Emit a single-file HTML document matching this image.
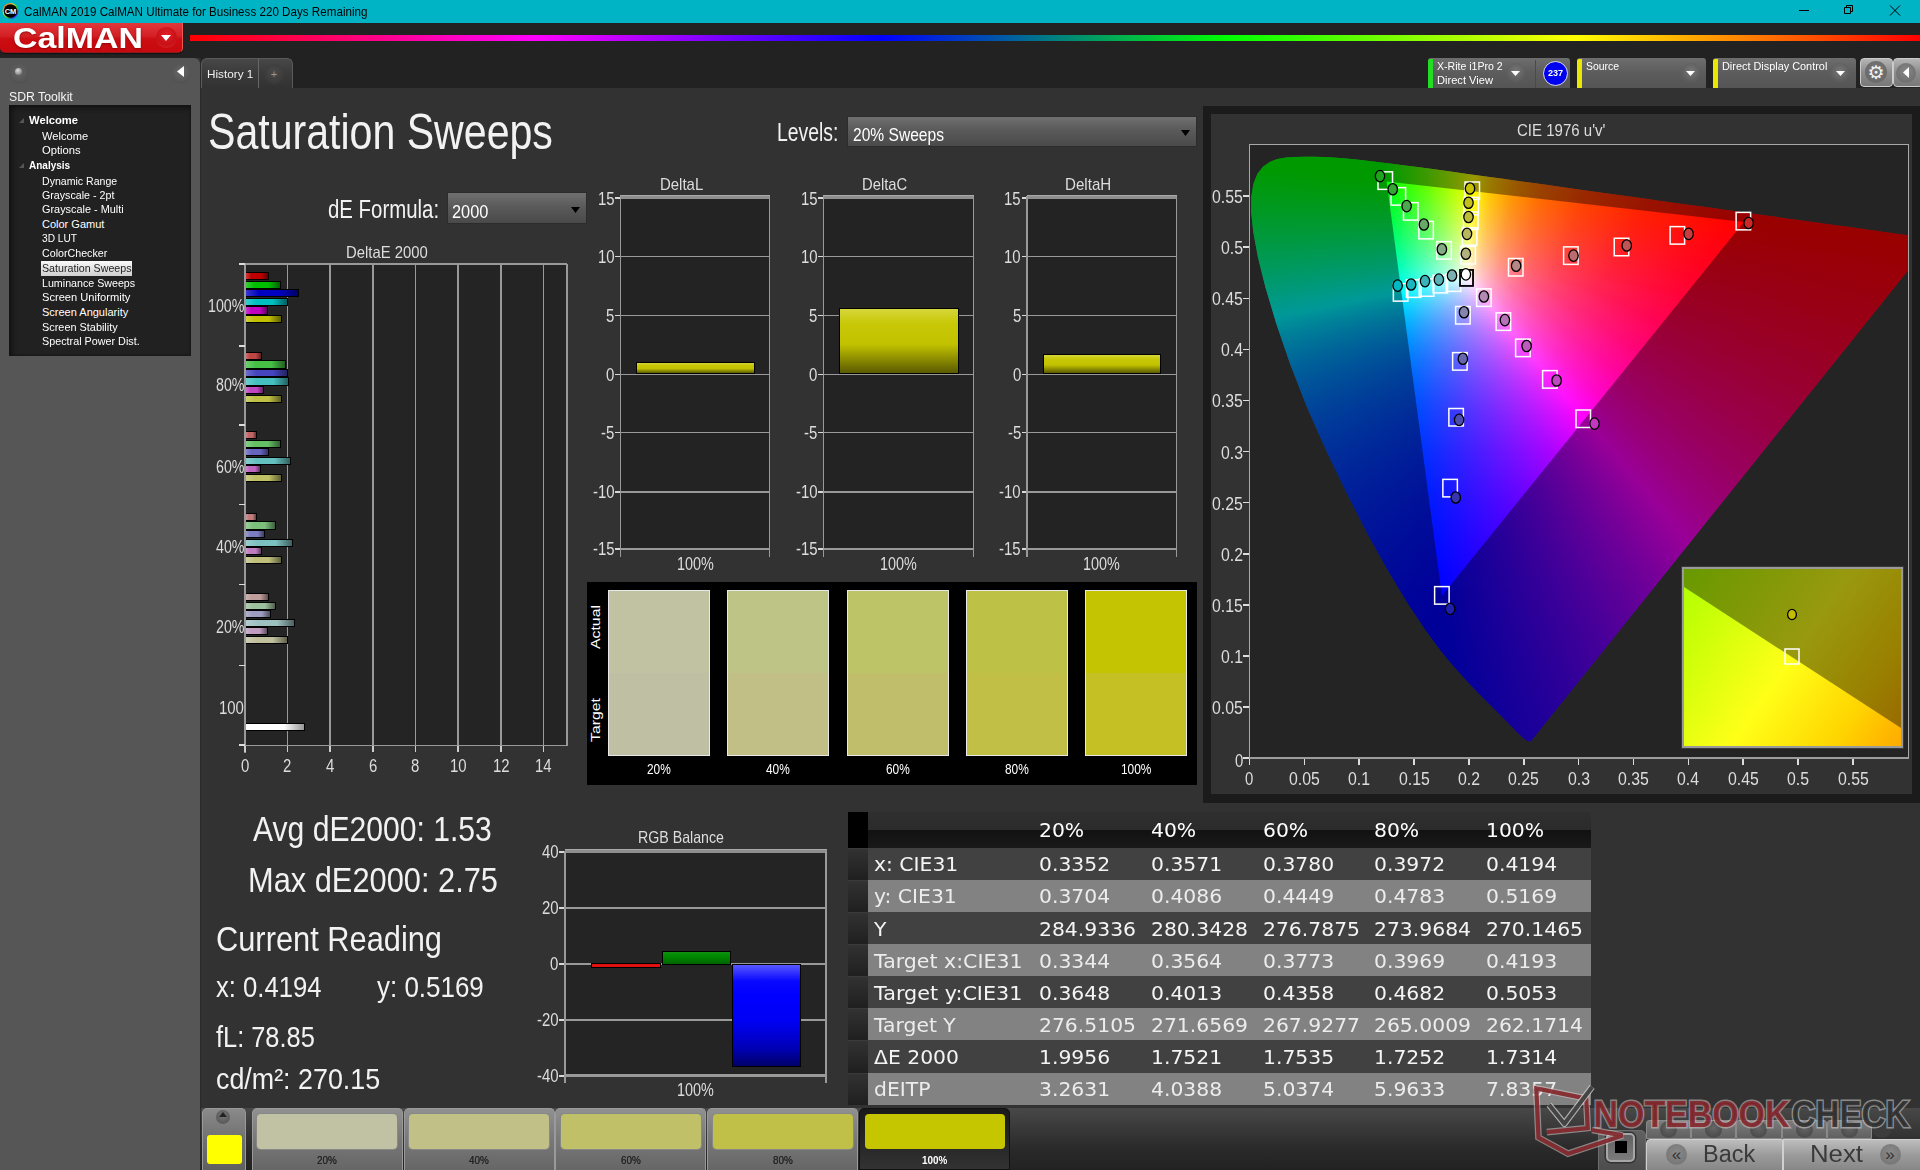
<!DOCTYPE html><html><head><meta charset="utf-8"><title>CalMAN</title><style>
html,body{margin:0;padding:0;background:#323232;overflow:hidden}
body{width:1920px;height:1170px;position:relative;font-family:"Liberation Sans",sans-serif}
div,span.t,i,svg{position:absolute;box-sizing:border-box}
span.t{white-space:nowrap;transform-origin:0 50%;display:block}
.cie i{display:block;height:2px}
</style></head><body><div style="left:201px;top:88px;width:1719px;height:1020px;background:#323232"></div>
<div style="left:0px;top:0px;width:1920px;height:23px;background:#00b4c6"></div>
<svg style="left:2px;top:2px" width="18" height="18" viewBox="0 0 18 18"><defs><linearGradient id="ic" x1="0" y1="0" x2="1" y2="1"><stop offset="0" stop-color="#e33"/><stop offset=".35" stop-color="#dd3"/><stop offset=".6" stop-color="#3c3"/><stop offset=".8" stop-color="#33e"/><stop offset="1" stop-color="#c3c"/></linearGradient></defs><circle cx="8.5" cy="9" r="8" fill="url(#ic)"/><circle cx="8.5" cy="9" r="6.8" fill="#000"/><text x="8.5" y="12" font-family="Liberation Sans,sans-serif" font-size="7.5" font-weight="bold" fill="#fff" text-anchor="middle">CM</text></svg>
<span class="t" style="left:23.5px;top:6px;font:12px/12px Liberation Sans,sans-serif;color:#000;transform:scaleX(0.97);">CalMAN 2019 CalMAN Ultimate for Business 220 Days Remaining</span>
<svg style="left:1790px;top:0" width="130" height="23" viewBox="0 0 130 23"><g stroke="#000" stroke-width="1" fill="none"><path d="M9 10.5h10"/><path d="M54.5 7.5h6v6h-6z M56.5 7.5v-2h6v6h-2"/><path d="M100 5.5l10 10M110 5.5l-10 10"/></g></svg>
<div style="left:0px;top:23px;width:1920px;height:35px;background:#222"></div>
<div style="left:0px;top:23px;width:183px;height:30px;background:linear-gradient(#e0383c,#d42025 45%,#cc0d12 55%,#c70a0f);border-radius:0 0 5px 5px;border-bottom:1px solid #8a1a1c;border-right:1px solid #e55;box-shadow:0 1px 1px #111"></div>
<span class="t" style="left:13px;top:24px;font:bold 29px/29px Liberation Sans,sans-serif;color:#fff;transform:scaleX(1.17);text-shadow:0 1px 2px rgba(120,0,0,.7);">CalMAN</span>
<div style="left:155.5px;top:27px;width:21px;height:21px;border-radius:50%;background:radial-gradient(circle at 50% 35%,#e02026,#c81016 60%,#d33 100%)"></div>
<svg style="left:161px;top:35px" width="10" height="6"><path d="M0 0h10l-5 6z" fill="#fff"/></svg>
<div style="left:190px;top:35px;width:1730px;height:6px;background:linear-gradient(90deg,#f00,#f0f 20%,#00f 40%,#0f0 60%,#ff0 80%,#f00);filter:blur(.5px)"></div>
<div style="left:0px;top:58px;width:199.5px;height:1112px;background:#565656;border-radius:0 6px 0 0"></div>
<div style="left:199.5px;top:58px;width:1.5px;height:1112px;background:#2a2a2a"></div>
<div style="left:9px;top:64px;width:20px;height:20px;border-radius:50%;background:radial-gradient(circle at 50% 40%,#666,#525252 70%,#5c5c5c)"></div>
<div style="left:14.5px;top:68px;width:7px;height:7px;border-radius:50%;background:radial-gradient(circle at 40% 35%,#ddd,#888 70%,#666)"></div>
<div style="left:171px;top:64px;width:20px;height:20px;border-radius:50%;background:radial-gradient(circle at 50% 40%,#686868,#525252 70%,#5c5c5c)"></div>
<svg style="left:177px;top:66px" width="7" height="11"><path d="M7 0v11L0 5.5z" fill="#fff"/></svg>
<span class="t" style="left:9px;top:91px;font:12.5px/12.5px Liberation Sans,sans-serif;color:#f4f4f4;transform:scaleX(0.98);">SDR Toolkit</span>
<div style="left:9px;top:105px;width:182px;height:251px;background:#212121;box-shadow:inset 3px 3px 5px #111,inset -1px -1px 2px #1a1a1a"></div>
<span class="t" style="left:29px;top:115px;font:bold 11px/11px Liberation Sans,sans-serif;color:#fff;transform:scaleX(1.02);">Welcome</span>
<span class="t" style="left:42px;top:131px;font:11px/11px Liberation Sans,sans-serif;color:#fff;transform:scaleX(1.01);">Welcome</span>
<span class="t" style="left:42px;top:145px;font:11px/11px Liberation Sans,sans-serif;color:#fff;transform:scaleX(1.02);">Options</span>
<span class="t" style="left:29px;top:160px;font:bold 11px/11px Liberation Sans,sans-serif;color:#fff;transform:scaleX(0.91);">Analysis</span>
<span class="t" style="left:42px;top:176px;font:11px/11px Liberation Sans,sans-serif;color:#fff;transform:scaleX(0.96);">Dynamic Range</span>
<span class="t" style="left:42px;top:190px;font:11px/11px Liberation Sans,sans-serif;color:#fff;transform:scaleX(0.97);">Grayscale - 2pt</span>
<span class="t" style="left:42px;top:204px;font:11px/11px Liberation Sans,sans-serif;color:#fff;transform:scaleX(0.99);">Grayscale - Multi</span>
<span class="t" style="left:42px;top:219px;font:11px/11px Liberation Sans,sans-serif;color:#fff;">Color Gamut</span>
<span class="t" style="left:42px;top:233px;font:11px/11px Liberation Sans,sans-serif;color:#fff;transform:scaleX(0.92);">3D LUT</span>
<span class="t" style="left:42px;top:248px;font:11px/11px Liberation Sans,sans-serif;color:#fff;transform:scaleX(0.97);">ColorChecker</span>
<div style="left:41px;top:261.2px;width:91px;height:14.6px;background:linear-gradient(#fafafa,#e4e4e4 50%,#cfcfcf)"></div>
<span class="t" style="left:42px;top:263px;font:11px/11px Liberation Sans,sans-serif;color:#222;transform:scaleX(0.97);">Saturation Sweeps</span>
<span class="t" style="left:42px;top:278px;font:11px/11px Liberation Sans,sans-serif;color:#fff;transform:scaleX(0.97);">Luminance Sweeps</span>
<span class="t" style="left:42px;top:292px;font:11px/11px Liberation Sans,sans-serif;color:#fff;transform:scaleX(1.01);">Screen Uniformity</span>
<span class="t" style="left:42px;top:307px;font:11px/11px Liberation Sans,sans-serif;color:#fff;">Screen Angularity</span>
<span class="t" style="left:42px;top:322px;font:11px/11px Liberation Sans,sans-serif;color:#fff;transform:scaleX(0.99);">Screen Stability</span>
<span class="t" style="left:42px;top:336px;font:11px/11px Liberation Sans,sans-serif;color:#fff;transform:scaleX(0.98);">Spectral Power Dist.</span>
<svg style="left:18.5px;top:118px" width="5" height="5"><path d="M5 0v5H0z" fill="#555"/></svg>
<svg style="left:18.5px;top:163px" width="5" height="5"><path d="M5 0v5H0z" fill="#555"/></svg>
<div style="left:201px;top:58px;width:1719px;height:30px;background:#222"></div>
<div style="left:201px;top:58px;width:91.5px;height:30px;background:linear-gradient(#484848,#3a3a3a 50%,#323232);border-radius:6px 6px 0 0;border:1px solid #5a5a5a;border-bottom:none"></div>
<div style="left:258px;top:59px;width:1px;height:29px;background:#666"></div>
<span class="t" style="left:206.5px;top:69px;font:11.5px/11.5px Liberation Sans,sans-serif;color:#f0f0f0;transform:scaleX(1.02);">History 1</span>
<div style="left:264px;top:64px;width:20px;height:20px;border-radius:50%;background:radial-gradient(circle at 50% 40%,#4a4a4a,#3a3a3a 70%,#404040)"></div>
<span class="t" style="left:270.79px;top:69px;font:11px/11px Liberation Sans,sans-serif;color:#999;">+</span>
<div style="left:1427.7px;top:58px;width:142.5px;height:30px;background:linear-gradient(#6e6e6e,#5c5c5c 50%,#555);border-radius:3px 3px 0 0"></div>
<div style="left:1427.7px;top:59px;width:5px;height:29px;background:#22dd22;border-radius:2px 0 0 0"></div>
<span class="t" style="left:1436.7px;top:61px;font:11px/11px Liberation Sans,sans-serif;color:#fff;transform:scaleX(0.96);">X-Rite i1Pro 2</span>
<span class="t" style="left:1436.7px;top:75px;font:11px/11px Liberation Sans,sans-serif;color:#fff;transform:scaleX(1.01);">Direct View</span>
<div style="left:1505.5px;top:62.5px;width:20px;height:20px;border-radius:50%;background:radial-gradient(circle at 50% 40%,#777,#5a5a5a 70%,#666)"></div>
<svg style="left:1511px;top:70.5px" width="9" height="5"><path d="M0 0h9l-4.5 5z" fill="#fff"/></svg>
<div style="left:1535px;top:60px;width:1px;height:28px;background:#4a4a4a"></div>
<div style="left:1542.5px;top:60.5px;width:25px;height:25px;border-radius:50%;background:#0000f0;border:1px solid #ddd"></div>
<span class="t" style="left:1547.7px;top:68px;font:bold 9.5px/9.5px Liberation Sans,sans-serif;color:#fff;transform:scaleX(0.95);">237</span>
<div style="left:1576.7px;top:58px;width:129.5px;height:30px;background:linear-gradient(#6e6e6e,#5c5c5c 50%,#555);border-radius:3px 3px 0 0"></div>
<div style="left:1576.7px;top:59px;width:5px;height:29px;background:#e8e800;border-radius:2px 0 0 0"></div>
<span class="t" style="left:1585.7px;top:61px;font:11px/11px Liberation Sans,sans-serif;color:#fff;transform:scaleX(0.95);">Source</span>
<div style="left:1680.5px;top:62.5px;width:20px;height:20px;border-radius:50%;background:radial-gradient(circle at 50% 40%,#777,#5a5a5a 70%,#666)"></div>
<svg style="left:1686px;top:70.5px" width="9" height="5"><path d="M0 0h9l-4.5 5z" fill="#fff"/></svg>
<div style="left:1712.7px;top:58px;width:143px;height:30px;background:linear-gradient(#6e6e6e,#5c5c5c 50%,#555);border-radius:3px 3px 0 0"></div>
<div style="left:1712.7px;top:59px;width:5px;height:29px;background:#e8e800;border-radius:2px 0 0 0"></div>
<span class="t" style="left:1721.7px;top:61px;font:11px/11px Liberation Sans,sans-serif;color:#fff;transform:scaleX(0.99);">Direct Display Control</span>
<div style="left:1830px;top:62.5px;width:20px;height:20px;border-radius:50%;background:radial-gradient(circle at 50% 40%,#777,#5a5a5a 70%,#666)"></div>
<svg style="left:1835.5px;top:70.5px" width="9" height="5"><path d="M0 0h9l-4.5 5z" fill="#fff"/></svg>
<div style="left:1859.5px;top:57.5px;width:33.5px;height:29px;background:linear-gradient(#b5b5b5,#8c8c8c 50%,#787878);border-radius:4px;border:1px solid #ccc"></div>
<div style="left:1865px;top:61px;width:22px;height:22px;border-radius:50%;background:radial-gradient(circle at 50% 40%,#777,#6a6a6a 70%,#808080)"></div>
<span class="t" style="left:1867.48px;top:63px;font:19px/19px DejaVu Sans,sans-serif;color:#f0f0f0;">⚙</span>
<div style="left:1893px;top:57.5px;width:30px;height:29px;background:linear-gradient(#b5b5b5,#8c8c8c 50%,#787878);border-radius:4px;border:1px solid #ccc"></div>
<div style="left:1896px;top:62.5px;width:20px;height:20px;border-radius:50%;background:radial-gradient(circle at 50% 40%,#888,#707070 70%,#808080)"></div>
<svg style="left:1903px;top:67px" width="6" height="11"><path d="M6 0v11L0 5.5z" fill="#fff"/></svg>
<span class="t" style="left:208.3px;top:107px;font:49.5px/49.5px Liberation Sans,sans-serif;color:#f2f2f2;transform:scaleX(0.83);">Saturation Sweeps</span>
<span class="t" style="left:777px;top:120px;font:25.5px/25.5px Liberation Sans,sans-serif;color:#f2f2f2;transform:scaleX(0.76);">Levels:</span>
<div style="left:846.5px;top:115.5px;width:350px;height:31.5px;background:linear-gradient(#707070,#5a5a5a 45%,#4a4a4a);border:1px solid #2c2c2c"></div>
<span class="t" style="left:852.5px;top:125px;font:19px/19px Liberation Sans,sans-serif;color:#fff;transform:scaleX(0.82);">20% Sweeps</span>
<svg style="left:1181px;top:129.75px" width="9" height="6"><path d="M0 0h9l-4.5 6z" fill="#000"/></svg>
<span class="t" style="left:328px;top:197px;font:25.5px/25.5px Liberation Sans,sans-serif;color:#f2f2f2;transform:scaleX(0.8);">dE Formula:</span>
<div style="left:446.5px;top:192px;width:140px;height:32px;background:linear-gradient(#707070,#5a5a5a 45%,#4a4a4a);border:1px solid #2c2c2c"></div>
<span class="t" style="left:452px;top:202px;font:19px/19px Liberation Sans,sans-serif;color:#fff;transform:scaleX(0.86);">2000</span>
<svg style="left:571px;top:206.5px" width="9" height="6"><path d="M0 0h9l-4.5 6z" fill="#000"/></svg>
<div style="left:620.7px;top:197px;width:148.8px;height:352.5px;background:#232323"></div>
<span class="t" style="left:660px;top:176px;font:17px/17px Liberation Sans,sans-serif;color:#ddd;transform:scaleX(0.88);">DeltaL</span>
<div style="left:615.2px;top:197.05px;width:5.5px;height:1.5px;background:#d8d8d8"></div>
<span class="t" style="left:598.08px;top:190px;font:18px/18px Liberation Sans,sans-serif;color:#ddd;transform:scaleX(0.83);">15</span>
<div style="left:620.7px;top:255.55px;width:148.8px;height:1.5px;background:#999"></div>
<div style="left:615.2px;top:255.55px;width:5.5px;height:1.5px;background:#d8d8d8"></div>
<span class="t" style="left:598.08px;top:248px;font:18px/18px Liberation Sans,sans-serif;color:#ddd;transform:scaleX(0.83);">10</span>
<div style="left:620.7px;top:314.55px;width:148.8px;height:1.5px;background:#999"></div>
<div style="left:615.2px;top:314.55px;width:5.5px;height:1.5px;background:#d8d8d8"></div>
<span class="t" style="left:606.39px;top:307px;font:18px/18px Liberation Sans,sans-serif;color:#ddd;transform:scaleX(0.83);">5</span>
<div style="left:620.7px;top:373.65px;width:148.8px;height:1.5px;background:#999"></div>
<div style="left:615.2px;top:373.65px;width:5.5px;height:1.5px;background:#d8d8d8"></div>
<span class="t" style="left:606.39px;top:366px;font:18px/18px Liberation Sans,sans-serif;color:#ddd;transform:scaleX(0.83);">0</span>
<div style="left:620.7px;top:431.75px;width:148.8px;height:1.5px;background:#999"></div>
<div style="left:615.2px;top:431.75px;width:5.5px;height:1.5px;background:#d8d8d8"></div>
<span class="t" style="left:601.42px;top:424px;font:18px/18px Liberation Sans,sans-serif;color:#ddd;transform:scaleX(0.83);">-5</span>
<div style="left:620.7px;top:491.05px;width:148.8px;height:1.5px;background:#999"></div>
<div style="left:615.2px;top:491.05px;width:5.5px;height:1.5px;background:#d8d8d8"></div>
<span class="t" style="left:593.11px;top:483px;font:18px/18px Liberation Sans,sans-serif;color:#ddd;transform:scaleX(0.83);">-10</span>
<div style="left:615.2px;top:548.25px;width:5.5px;height:1.5px;background:#d8d8d8"></div>
<span class="t" style="left:593.11px;top:540px;font:18px/18px Liberation Sans,sans-serif;color:#ddd;transform:scaleX(0.83);">-15</span>
<div style="left:620.2px;top:195px;width:149.8px;height:4px;background:#8e8e8e;border-top:1px solid #a8a8a8"></div>
<div style="left:619.95px;top:195.5px;width:1.5px;height:361px;background:#999"></div>
<div style="left:768.75px;top:195.5px;width:1.5px;height:361px;background:#999"></div>
<div style="left:620.7px;top:548.25px;width:148.8px;height:1.5px;background:#999"></div>
<div style="left:636px;top:362px;width:119px;height:11.7px;background:linear-gradient(#d6d63c,#c8c808 22%,#c2c200 55%,#5a5a00);border:1.5px solid #000"></div>
<span class="t" style="left:676.69px;top:555px;font:18px/18px Liberation Sans,sans-serif;color:#ddd;transform:scaleX(0.8);">100%</span>
<div style="left:823.5px;top:197px;width:150px;height:352.5px;background:#232323"></div>
<span class="t" style="left:862px;top:176px;font:17px/17px Liberation Sans,sans-serif;color:#ddd;transform:scaleX(0.87);">DeltaC</span>
<div style="left:818px;top:197.05px;width:5.5px;height:1.5px;background:#d8d8d8"></div>
<span class="t" style="left:800.88px;top:190px;font:18px/18px Liberation Sans,sans-serif;color:#ddd;transform:scaleX(0.83);">15</span>
<div style="left:823.5px;top:255.55px;width:150px;height:1.5px;background:#999"></div>
<div style="left:818px;top:255.55px;width:5.5px;height:1.5px;background:#d8d8d8"></div>
<span class="t" style="left:800.88px;top:248px;font:18px/18px Liberation Sans,sans-serif;color:#ddd;transform:scaleX(0.83);">10</span>
<div style="left:823.5px;top:314.55px;width:150px;height:1.5px;background:#999"></div>
<div style="left:818px;top:314.55px;width:5.5px;height:1.5px;background:#d8d8d8"></div>
<span class="t" style="left:809.19px;top:307px;font:18px/18px Liberation Sans,sans-serif;color:#ddd;transform:scaleX(0.83);">5</span>
<div style="left:823.5px;top:373.65px;width:150px;height:1.5px;background:#999"></div>
<div style="left:818px;top:373.65px;width:5.5px;height:1.5px;background:#d8d8d8"></div>
<span class="t" style="left:809.19px;top:366px;font:18px/18px Liberation Sans,sans-serif;color:#ddd;transform:scaleX(0.83);">0</span>
<div style="left:823.5px;top:431.75px;width:150px;height:1.5px;background:#999"></div>
<div style="left:818px;top:431.75px;width:5.5px;height:1.5px;background:#d8d8d8"></div>
<span class="t" style="left:804.22px;top:424px;font:18px/18px Liberation Sans,sans-serif;color:#ddd;transform:scaleX(0.83);">-5</span>
<div style="left:823.5px;top:491.05px;width:150px;height:1.5px;background:#999"></div>
<div style="left:818px;top:491.05px;width:5.5px;height:1.5px;background:#d8d8d8"></div>
<span class="t" style="left:795.91px;top:483px;font:18px/18px Liberation Sans,sans-serif;color:#ddd;transform:scaleX(0.83);">-10</span>
<div style="left:818px;top:548.25px;width:5.5px;height:1.5px;background:#d8d8d8"></div>
<span class="t" style="left:795.91px;top:540px;font:18px/18px Liberation Sans,sans-serif;color:#ddd;transform:scaleX(0.83);">-15</span>
<div style="left:823px;top:195px;width:151px;height:4px;background:#8e8e8e;border-top:1px solid #a8a8a8"></div>
<div style="left:822.75px;top:195.5px;width:1.5px;height:361px;background:#999"></div>
<div style="left:972.75px;top:195.5px;width:1.5px;height:361px;background:#999"></div>
<div style="left:823.5px;top:548.25px;width:150px;height:1.5px;background:#999"></div>
<div style="left:839px;top:307.5px;width:119.5px;height:66.2px;background:linear-gradient(#d6d63c,#c8c808 22%,#c2c200 55%,#5a5a00);border:1.5px solid #000"></div>
<span class="t" style="left:880.09px;top:555px;font:18px/18px Liberation Sans,sans-serif;color:#ddd;transform:scaleX(0.8);">100%</span>
<div style="left:1027px;top:197px;width:149.5px;height:352.5px;background:#232323"></div>
<span class="t" style="left:1065px;top:176px;font:17px/17px Liberation Sans,sans-serif;color:#ddd;transform:scaleX(0.89);">DeltaH</span>
<div style="left:1021.5px;top:197.05px;width:5.5px;height:1.5px;background:#d8d8d8"></div>
<span class="t" style="left:1004.38px;top:190px;font:18px/18px Liberation Sans,sans-serif;color:#ddd;transform:scaleX(0.83);">15</span>
<div style="left:1027px;top:255.55px;width:149.5px;height:1.5px;background:#999"></div>
<div style="left:1021.5px;top:255.55px;width:5.5px;height:1.5px;background:#d8d8d8"></div>
<span class="t" style="left:1004.38px;top:248px;font:18px/18px Liberation Sans,sans-serif;color:#ddd;transform:scaleX(0.83);">10</span>
<div style="left:1027px;top:314.55px;width:149.5px;height:1.5px;background:#999"></div>
<div style="left:1021.5px;top:314.55px;width:5.5px;height:1.5px;background:#d8d8d8"></div>
<span class="t" style="left:1012.69px;top:307px;font:18px/18px Liberation Sans,sans-serif;color:#ddd;transform:scaleX(0.83);">5</span>
<div style="left:1027px;top:373.65px;width:149.5px;height:1.5px;background:#999"></div>
<div style="left:1021.5px;top:373.65px;width:5.5px;height:1.5px;background:#d8d8d8"></div>
<span class="t" style="left:1012.69px;top:366px;font:18px/18px Liberation Sans,sans-serif;color:#ddd;transform:scaleX(0.83);">0</span>
<div style="left:1027px;top:431.75px;width:149.5px;height:1.5px;background:#999"></div>
<div style="left:1021.5px;top:431.75px;width:5.5px;height:1.5px;background:#d8d8d8"></div>
<span class="t" style="left:1007.72px;top:424px;font:18px/18px Liberation Sans,sans-serif;color:#ddd;transform:scaleX(0.83);">-5</span>
<div style="left:1027px;top:491.05px;width:149.5px;height:1.5px;background:#999"></div>
<div style="left:1021.5px;top:491.05px;width:5.5px;height:1.5px;background:#d8d8d8"></div>
<span class="t" style="left:999.41px;top:483px;font:18px/18px Liberation Sans,sans-serif;color:#ddd;transform:scaleX(0.83);">-10</span>
<div style="left:1021.5px;top:548.25px;width:5.5px;height:1.5px;background:#d8d8d8"></div>
<span class="t" style="left:999.41px;top:540px;font:18px/18px Liberation Sans,sans-serif;color:#ddd;transform:scaleX(0.83);">-15</span>
<div style="left:1026.5px;top:195px;width:150.5px;height:4px;background:#8e8e8e;border-top:1px solid #a8a8a8"></div>
<div style="left:1026.25px;top:195.5px;width:1.5px;height:361px;background:#999"></div>
<div style="left:1175.75px;top:195.5px;width:1.5px;height:361px;background:#999"></div>
<div style="left:1027px;top:548.25px;width:149.5px;height:1.5px;background:#999"></div>
<div style="left:1042.5px;top:353.5px;width:118.5px;height:20.2px;background:linear-gradient(#d6d63c,#c8c808 22%,#c2c200 55%,#5a5a00);border:1.5px solid #000"></div>
<span class="t" style="left:1083.34px;top:555px;font:18px/18px Liberation Sans,sans-serif;color:#ddd;transform:scaleX(0.8);">100%</span>
<div style="left:587px;top:582px;width:610px;height:202.5px;background:#000"></div>
<div style="left:608px;top:590px;width:102px;height:165.5px;background:linear-gradient(#c1c2a2 50%,#bfbfa3 50%);border:1px solid #e8e8e8"></div>
<span class="t" style="left:647.1px;top:762px;font:14.5px/14.5px Liberation Sans,sans-serif;color:#fff;transform:scaleX(0.82);">20%</span>
<div style="left:727.3px;top:590px;width:102px;height:165.5px;background:linear-gradient(#bec486 50%,#c1bf85 50%);border:1px solid #e8e8e8"></div>
<span class="t" style="left:766.4px;top:762px;font:14.5px/14.5px Liberation Sans,sans-serif;color:#fff;transform:scaleX(0.82);">40%</span>
<div style="left:846.6px;top:590px;width:102px;height:165.5px;background:linear-gradient(#bdc367 50%,#c0be6b 50%);border:1px solid #e8e8e8"></div>
<span class="t" style="left:885.7px;top:762px;font:14.5px/14.5px Liberation Sans,sans-serif;color:#fff;transform:scaleX(0.82);">60%</span>
<div style="left:965.9px;top:590px;width:102px;height:165.5px;background:linear-gradient(#bdc246 50%,#c1bf46 50%);border:1px solid #e8e8e8"></div>
<span class="t" style="left:1005px;top:762px;font:14.5px/14.5px Liberation Sans,sans-serif;color:#fff;transform:scaleX(0.82);">80%</span>
<div style="left:1085.2px;top:590px;width:102px;height:165.5px;background:linear-gradient(#c4c402 50%,#c5c024 50%);border:1px solid #e8e8e8"></div>
<span class="t" style="left:1121px;top:762px;font:14.5px/14.5px Liberation Sans,sans-serif;color:#fff;transform:scaleX(0.82);">100%</span>
<span class="t" style="left:596px;top:627px;font:13.5px/14px Liberation Sans,sans-serif;color:#fff;transform:translate(-50%,-50%) rotate(-90deg) scaleX(1.17);transform-origin:50% 50%">Actual</span>
<span class="t" style="left:596px;top:719.5px;font:13.5px/14px Liberation Sans,sans-serif;color:#fff;transform:translate(-50%,-50%) rotate(-90deg) scaleX(1.17);transform-origin:50% 50%">Target</span>
<div style="left:245px;top:264px;width:321.5px;height:481.5px;background:#242424"></div>
<span class="t" style="left:346.25px;top:244px;font:16.5px/16.5px Liberation Sans,sans-serif;color:#ddd;transform:scaleX(0.9);">DeltaE 2000</span>
<div style="left:286.58px;top:264px;width:1.8px;height:481.5px;background:#999"></div>
<div style="left:329.26px;top:264px;width:1.8px;height:481.5px;background:#999"></div>
<div style="left:371.94px;top:264px;width:1.8px;height:481.5px;background:#999"></div>
<div style="left:414.62px;top:264px;width:1.8px;height:481.5px;background:#999"></div>
<div style="left:457.3px;top:264px;width:1.8px;height:481.5px;background:#999"></div>
<div style="left:499.98px;top:264px;width:1.8px;height:481.5px;background:#999"></div>
<div style="left:542.66px;top:264px;width:1.8px;height:481.5px;background:#999"></div>
<div style="left:244px;top:263px;width:323px;height:2px;background:#999"></div>
<div style="left:565.75px;top:264px;width:1.8px;height:481.5px;background:#999"></div>
<div style="left:244px;top:264px;width:2px;height:488.5px;background:#999"></div>
<div style="left:245px;top:744.5px;width:321.5px;height:1.8px;background:#999"></div>
<div style="left:244.05px;top:745.5px;width:1.5px;height:6px;background:#ccc"></div>
<span class="t" style="left:240.65px;top:757px;font:18px/18px Liberation Sans,sans-serif;color:#ddd;transform:scaleX(0.83);">0</span>
<div style="left:286.73px;top:745.5px;width:1.5px;height:6px;background:#ccc"></div>
<span class="t" style="left:283.33px;top:757px;font:18px/18px Liberation Sans,sans-serif;color:#ddd;transform:scaleX(0.83);">2</span>
<div style="left:329.41px;top:745.5px;width:1.5px;height:6px;background:#ccc"></div>
<span class="t" style="left:326.01px;top:757px;font:18px/18px Liberation Sans,sans-serif;color:#ddd;transform:scaleX(0.83);">4</span>
<div style="left:372.09px;top:745.5px;width:1.5px;height:6px;background:#ccc"></div>
<span class="t" style="left:368.69px;top:757px;font:18px/18px Liberation Sans,sans-serif;color:#ddd;transform:scaleX(0.83);">6</span>
<div style="left:414.77px;top:745.5px;width:1.5px;height:6px;background:#ccc"></div>
<span class="t" style="left:411.37px;top:757px;font:18px/18px Liberation Sans,sans-serif;color:#ddd;transform:scaleX(0.83);">8</span>
<div style="left:457.45px;top:745.5px;width:1.5px;height:6px;background:#ccc"></div>
<span class="t" style="left:449.89px;top:757px;font:18px/18px Liberation Sans,sans-serif;color:#ddd;transform:scaleX(0.83);">10</span>
<div style="left:500.13px;top:745.5px;width:1.5px;height:6px;background:#ccc"></div>
<span class="t" style="left:492.57px;top:757px;font:18px/18px Liberation Sans,sans-serif;color:#ddd;transform:scaleX(0.83);">12</span>
<div style="left:542.81px;top:745.5px;width:1.5px;height:6px;background:#ccc"></div>
<span class="t" style="left:535.25px;top:757px;font:18px/18px Liberation Sans,sans-serif;color:#ddd;transform:scaleX(0.83);">14</span>
<div style="left:238.5px;top:263.05px;width:6px;height:1.7px;background:#ddd"></div>
<div style="left:238.5px;top:344.95px;width:6px;height:1.7px;background:#ddd"></div>
<div style="left:238.5px;top:424.15px;width:6px;height:1.7px;background:#ddd"></div>
<div style="left:238.5px;top:503.75px;width:6px;height:1.7px;background:#ddd"></div>
<div style="left:238.5px;top:583.75px;width:6px;height:1.7px;background:#ddd"></div>
<div style="left:238.5px;top:664.65px;width:6px;height:1.7px;background:#ddd"></div>
<div style="left:238.5px;top:744.45px;width:6px;height:1.7px;background:#ddd"></div>
<span class="t" style="left:207.63px;top:297px;font:18px/18px Liberation Sans,sans-serif;color:#ddd;transform:scaleX(0.79);">100%</span>
<span class="t" style="left:215.54px;top:376px;font:18px/18px Liberation Sans,sans-serif;color:#ddd;transform:scaleX(0.79);">80%</span>
<span class="t" style="left:215.54px;top:458px;font:18px/18px Liberation Sans,sans-serif;color:#ddd;transform:scaleX(0.79);">60%</span>
<span class="t" style="left:215.54px;top:538px;font:18px/18px Liberation Sans,sans-serif;color:#ddd;transform:scaleX(0.79);">40%</span>
<span class="t" style="left:215.54px;top:618px;font:18px/18px Liberation Sans,sans-serif;color:#ddd;transform:scaleX(0.79);">20%</span>
<span class="t" style="left:219.08px;top:699px;font:18px/18px Liberation Sans,sans-serif;color:#ddd;transform:scaleX(0.83);">100</span>
<div style="left:246px;top:272.2px;width:23.1px;height:8.2px;background:linear-gradient(90deg,#cd3838,#c00000 25%,#c00000 65%,#600000);border:1.6px solid #000;border-left:none"></div>
<div style="left:246px;top:280.75px;width:34.9px;height:8.2px;background:linear-gradient(90deg,#38cd38,#00c000 25%,#00c000 65%,#006000);border:1.6px solid #000;border-left:none"></div>
<div style="left:246px;top:289.3px;width:53.2px;height:8.2px;background:linear-gradient(90deg,#3838cd,#0000c0 25%,#0000c0 65%,#000060);border:1.6px solid #000;border-left:none"></div>
<div style="left:246px;top:297.85px;width:41.7px;height:8.2px;background:linear-gradient(90deg,#38cdcd,#00c0c0 25%,#00c0c0 65%,#006060);border:1.6px solid #000;border-left:none"></div>
<div style="left:246px;top:306.4px;width:22px;height:8.2px;background:linear-gradient(90deg,#cd38cd,#c000c0 25%,#c000c0 65%,#600060);border:1.6px solid #000;border-left:none"></div>
<div style="left:246px;top:314.95px;width:36.2px;height:8.2px;background:linear-gradient(90deg,#cdcd38,#c0c000 25%,#c0c000 65%,#606000);border:1.6px solid #000;border-left:none"></div>
<div style="left:246px;top:351.8px;width:16.3px;height:8.2px;background:linear-gradient(90deg,#cd6d6d,#c04545 25%,#c04545 65%,#602222);border:1.6px solid #000;border-left:none"></div>
<div style="left:246px;top:360.35px;width:40.1px;height:8.2px;background:linear-gradient(90deg,#6dcd6d,#45c045 25%,#45c045 65%,#226022);border:1.6px solid #000;border-left:none"></div>
<div style="left:246px;top:368.9px;width:41.7px;height:8.2px;background:linear-gradient(90deg,#6d6dcd,#4545c0 25%,#4545c0 65%,#222260);border:1.6px solid #000;border-left:none"></div>
<div style="left:246px;top:377.45px;width:43.1px;height:8.2px;background:linear-gradient(90deg,#6dcdcd,#45c0c0 25%,#45c0c0 65%,#226060);border:1.6px solid #000;border-left:none"></div>
<div style="left:246px;top:386px;width:17.7px;height:8.2px;background:linear-gradient(90deg,#cd6dcd,#c045c0 25%,#c045c0 65%,#602260);border:1.6px solid #000;border-left:none"></div>
<div style="left:246px;top:394.55px;width:36.2px;height:8.2px;background:linear-gradient(90deg,#cdcd6d,#c0c045 25%,#c0c045 65%,#606022);border:1.6px solid #000;border-left:none"></div>
<div style="left:246px;top:431.1px;width:10.9px;height:8.2px;background:linear-gradient(90deg,#cd8686,#c06565 25%,#c06565 65%,#603232);border:1.6px solid #000;border-left:none"></div>
<div style="left:246px;top:439.65px;width:34.9px;height:8.2px;background:linear-gradient(90deg,#86cd86,#65c065 25%,#65c065 65%,#326032);border:1.6px solid #000;border-left:none"></div>
<div style="left:246px;top:448.2px;width:22.9px;height:8.2px;background:linear-gradient(90deg,#8686cd,#6565c0 25%,#6565c0 65%,#323260);border:1.6px solid #000;border-left:none"></div>
<div style="left:246px;top:456.75px;width:45px;height:8.2px;background:linear-gradient(90deg,#86cdcd,#65c0c0 25%,#65c0c0 65%,#326060);border:1.6px solid #000;border-left:none"></div>
<div style="left:246px;top:465.3px;width:14.7px;height:8.2px;background:linear-gradient(90deg,#cd86cd,#c065c0 25%,#c065c0 65%,#603260);border:1.6px solid #000;border-left:none"></div>
<div style="left:246px;top:473.85px;width:35.9px;height:8.2px;background:linear-gradient(90deg,#cdcd86,#c0c065 25%,#c0c065 65%,#606032);border:1.6px solid #000;border-left:none"></div>
<div style="left:246px;top:512.9px;width:10.9px;height:8.2px;background:linear-gradient(90deg,#cd9898,#c07c7c 25%,#c07c7c 65%,#603e3e);border:1.6px solid #000;border-left:none"></div>
<div style="left:246px;top:521.45px;width:30px;height:8.2px;background:linear-gradient(90deg,#98cd98,#7cc07c 25%,#7cc07c 65%,#3e603e);border:1.6px solid #000;border-left:none"></div>
<div style="left:246px;top:530px;width:19px;height:8.2px;background:linear-gradient(90deg,#9898cd,#7c7cc0 25%,#7c7cc0 65%,#3e3e60);border:1.6px solid #000;border-left:none"></div>
<div style="left:246px;top:538.55px;width:46.9px;height:8.2px;background:linear-gradient(90deg,#98cdcd,#7cc0c0 25%,#7cc0c0 65%,#3e6060);border:1.6px solid #000;border-left:none"></div>
<div style="left:246px;top:547.1px;width:15.7px;height:8.2px;background:linear-gradient(90deg,#cd98cd,#c07cc0 25%,#c07cc0 65%,#603e60);border:1.6px solid #000;border-left:none"></div>
<div style="left:246px;top:555.65px;width:35.9px;height:8.2px;background:linear-gradient(90deg,#cdcd98,#c0c07c 25%,#c0c07c 65%,#60603e);border:1.6px solid #000;border-left:none"></div>
<div style="left:246px;top:593.1px;width:22.9px;height:8.2px;background:linear-gradient(90deg,#cdb2b2,#c09d9d 25%,#c09d9d 65%,#604e4e);border:1.6px solid #000;border-left:none"></div>
<div style="left:246px;top:601.65px;width:30px;height:8.2px;background:linear-gradient(90deg,#b2cdb2,#9dc09d 25%,#9dc09d 65%,#4e604e);border:1.6px solid #000;border-left:none"></div>
<div style="left:246px;top:610.2px;width:24.5px;height:8.2px;background:linear-gradient(90deg,#b2b2cd,#9d9dc0 25%,#9d9dc0 65%,#4e4e60);border:1.6px solid #000;border-left:none"></div>
<div style="left:246px;top:618.75px;width:48.9px;height:8.2px;background:linear-gradient(90deg,#b2cdcd,#9dc0c0 25%,#9dc0c0 65%,#4e6060);border:1.6px solid #000;border-left:none"></div>
<div style="left:246px;top:627.3px;width:21.9px;height:8.2px;background:linear-gradient(90deg,#cdb2cd,#c09dc0 25%,#c09dc0 65%,#604e60);border:1.6px solid #000;border-left:none"></div>
<div style="left:246px;top:635.85px;width:41.7px;height:8.2px;background:linear-gradient(90deg,#cdcdb2,#c0c09d 25%,#c0c09d 65%,#60604e);border:1.6px solid #000;border-left:none"></div>
<div style="left:246px;top:722.9px;width:58.7px;height:8.2px;background:linear-gradient(90deg,#ffffff,#ffffff 25%,#ffffff 65%,#969696);border:1.6px solid #000;border-left:none"></div>
<span class="t" style="left:252.5px;top:811px;font:35px/35px Liberation Sans,sans-serif;color:#f2f2f2;transform:scaleX(0.86);">Avg dE2000: 1.53</span>
<span class="t" style="left:248px;top:862px;font:35px/35px Liberation Sans,sans-serif;color:#f2f2f2;transform:scaleX(0.88);">Max dE2000: 2.75</span>
<span class="t" style="left:215.5px;top:921px;font:35px/35px Liberation Sans,sans-serif;color:#f2f2f2;transform:scaleX(0.88);">Current Reading</span>
<span class="t" style="left:215.5px;top:972px;font:29.5px/29.5px Liberation Sans,sans-serif;color:#f2f2f2;transform:scaleX(0.87);">x: 0.4194</span>
<span class="t" style="left:376.5px;top:972px;font:29.5px/29.5px Liberation Sans,sans-serif;color:#f2f2f2;transform:scaleX(0.88);">y: 0.5169</span>
<span class="t" style="left:215.5px;top:1022px;font:29.5px/29.5px Liberation Sans,sans-serif;color:#f2f2f2;transform:scaleX(0.86);">fL: 78.85</span>
<span class="t" style="left:215.5px;top:1064px;font:29.5px/29.5px Liberation Sans,sans-serif;color:#f2f2f2;transform:scaleX(0.91);">cd/m²: 270.15</span>
<div style="left:564.5px;top:851px;width:261px;height:224.5px;background:#242424"></div>
<span class="t" style="left:638px;top:829px;font:16.5px/16.5px Liberation Sans,sans-serif;color:#ddd;transform:scaleX(0.86);">RGB Balance</span>
<div style="left:559px;top:851.25px;width:5.5px;height:1.5px;background:#d8d8d8"></div>
<span class="t" style="left:541.88px;top:843px;font:18px/18px Liberation Sans,sans-serif;color:#ddd;transform:scaleX(0.83);">40</span>
<div style="left:564.5px;top:907px;width:261px;height:2px;background:#999"></div>
<div style="left:559px;top:907.25px;width:5.5px;height:1.5px;background:#d8d8d8"></div>
<span class="t" style="left:541.88px;top:899px;font:18px/18px Liberation Sans,sans-serif;color:#ddd;transform:scaleX(0.83);">20</span>
<div style="left:564.5px;top:963px;width:261px;height:2px;background:#999"></div>
<div style="left:559px;top:963.25px;width:5.5px;height:1.5px;background:#d8d8d8"></div>
<span class="t" style="left:550.19px;top:955px;font:18px/18px Liberation Sans,sans-serif;color:#ddd;transform:scaleX(0.83);">0</span>
<div style="left:564.5px;top:1019px;width:261px;height:2px;background:#999"></div>
<div style="left:559px;top:1019.25px;width:5.5px;height:1.5px;background:#d8d8d8"></div>
<span class="t" style="left:536.91px;top:1011px;font:18px/18px Liberation Sans,sans-serif;color:#ddd;transform:scaleX(0.83);">-20</span>
<div style="left:559px;top:1075.25px;width:5.5px;height:1.5px;background:#d8d8d8"></div>
<span class="t" style="left:536.91px;top:1067px;font:18px/18px Liberation Sans,sans-serif;color:#ddd;transform:scaleX(0.83);">-40</span>
<div style="left:564.5px;top:849px;width:262px;height:4px;background:#8e8e8e;border-top:1px solid #a8a8a8"></div>
<div style="left:564px;top:851px;width:1.5px;height:231.5px;background:#999"></div>
<div style="left:825px;top:851px;width:1.5px;height:231.5px;background:#999"></div>
<div style="left:564.5px;top:1074px;width:261px;height:2.5px;background:#999"></div>
<div style="left:591px;top:963.3px;width:70px;height:4.6px;background:#e01010;border:1.5px solid #000"></div>
<div style="left:661.5px;top:951.3px;width:69.5px;height:13.4px;background:linear-gradient(#109010,#008800 40%,#006400);border:1.5px solid #000"></div>
<div style="left:731.5px;top:963.5px;width:69.5px;height:103.5px;background:linear-gradient(#5858ff,#0808ff 16%,#0000ff 30%,#0000f4 55%,#0000b8 82%,#000068);border:1.5px solid #000"></div>
<span class="t" style="left:676.59px;top:1081px;font:18px/18px Liberation Sans,sans-serif;color:#ddd;transform:scaleX(0.8);">100%</span>
<div style="left:848px;top:812px;width:743px;height:35.5px;background:linear-gradient(#2f2f2f,#2b2b2b 50%,#121212 51%,#191919)"></div>
<div style="left:848px;top:812px;width:20px;height:35.5px;background:#000"></div>
<span class="t" style="left:1039px;top:821px;font:19px/19px DejaVu Sans,sans-serif;color:#fff;transform:scaleX(1.07);">20%</span>
<span class="t" style="left:1150.8px;top:821px;font:19px/19px DejaVu Sans,sans-serif;color:#fff;transform:scaleX(1.07);">40%</span>
<span class="t" style="left:1262.6px;top:821px;font:19px/19px DejaVu Sans,sans-serif;color:#fff;transform:scaleX(1.07);">60%</span>
<span class="t" style="left:1374.3px;top:821px;font:19px/19px DejaVu Sans,sans-serif;color:#fff;transform:scaleX(1.07);">80%</span>
<span class="t" style="left:1486px;top:821px;font:19px/19px DejaVu Sans,sans-serif;color:#fff;transform:scaleX(1.07);">100%</span>
<div style="left:868px;top:847.5px;width:723px;height:32.3px;background:#414141"></div>
<div style="left:848px;top:847.5px;width:20px;height:32.3px;background:linear-gradient(#323232,#1f1f1f);border-top:1px solid #3a3a3a"></div>
<span class="t" style="left:874.2px;top:855px;font:19px/19px DejaVu Sans,sans-serif;color:#f4f4f4;transform:scaleX(1.07);">x: CIE31</span>
<span class="t" style="left:1039px;top:855px;font:19px/19px DejaVu Sans,sans-serif;color:#f4f4f4;transform:scaleX(1.07);">0.3352</span>
<span class="t" style="left:1150.8px;top:855px;font:19px/19px DejaVu Sans,sans-serif;color:#f4f4f4;transform:scaleX(1.07);">0.3571</span>
<span class="t" style="left:1262.6px;top:855px;font:19px/19px DejaVu Sans,sans-serif;color:#f4f4f4;transform:scaleX(1.07);">0.3780</span>
<span class="t" style="left:1374.3px;top:855px;font:19px/19px DejaVu Sans,sans-serif;color:#f4f4f4;transform:scaleX(1.07);">0.3972</span>
<span class="t" style="left:1486px;top:855px;font:19px/19px DejaVu Sans,sans-serif;color:#f4f4f4;transform:scaleX(1.07);">0.4194</span>
<div style="left:868px;top:879.66px;width:723px;height:32.3px;background:#828282"></div>
<div style="left:848px;top:879.66px;width:20px;height:32.3px;background:linear-gradient(#323232,#1f1f1f);border-top:1px solid #3a3a3a"></div>
<span class="t" style="left:874.2px;top:887px;font:19px/19px DejaVu Sans,sans-serif;color:#ececec;transform:scaleX(1.07);">y: CIE31</span>
<span class="t" style="left:1039px;top:887px;font:19px/19px DejaVu Sans,sans-serif;color:#ececec;transform:scaleX(1.07);">0.3704</span>
<span class="t" style="left:1150.8px;top:887px;font:19px/19px DejaVu Sans,sans-serif;color:#ececec;transform:scaleX(1.07);">0.4086</span>
<span class="t" style="left:1262.6px;top:887px;font:19px/19px DejaVu Sans,sans-serif;color:#ececec;transform:scaleX(1.07);">0.4449</span>
<span class="t" style="left:1374.3px;top:887px;font:19px/19px DejaVu Sans,sans-serif;color:#ececec;transform:scaleX(1.07);">0.4783</span>
<span class="t" style="left:1486px;top:887px;font:19px/19px DejaVu Sans,sans-serif;color:#ececec;transform:scaleX(1.07);">0.5169</span>
<div style="left:868px;top:911.82px;width:723px;height:32.3px;background:#414141"></div>
<div style="left:848px;top:911.82px;width:20px;height:32.3px;background:linear-gradient(#323232,#1f1f1f);border-top:1px solid #3a3a3a"></div>
<span class="t" style="left:874.2px;top:920px;font:19px/19px DejaVu Sans,sans-serif;color:#f4f4f4;transform:scaleX(1.07);">Y</span>
<span class="t" style="left:1039px;top:920px;font:19px/19px DejaVu Sans,sans-serif;color:#f4f4f4;transform:scaleX(1.07);">284.9336</span>
<span class="t" style="left:1150.8px;top:920px;font:19px/19px DejaVu Sans,sans-serif;color:#f4f4f4;transform:scaleX(1.07);">280.3428</span>
<span class="t" style="left:1262.6px;top:920px;font:19px/19px DejaVu Sans,sans-serif;color:#f4f4f4;transform:scaleX(1.07);">276.7875</span>
<span class="t" style="left:1374.3px;top:920px;font:19px/19px DejaVu Sans,sans-serif;color:#f4f4f4;transform:scaleX(1.07);">273.9684</span>
<span class="t" style="left:1486px;top:920px;font:19px/19px DejaVu Sans,sans-serif;color:#f4f4f4;transform:scaleX(1.07);">270.1465</span>
<div style="left:868px;top:943.98px;width:723px;height:32.3px;background:#828282"></div>
<div style="left:848px;top:943.98px;width:20px;height:32.3px;background:linear-gradient(#323232,#1f1f1f);border-top:1px solid #3a3a3a"></div>
<span class="t" style="left:874.2px;top:952px;font:19px/19px DejaVu Sans,sans-serif;color:#ececec;transform:scaleX(1.08);">Target x:CIE31</span>
<span class="t" style="left:1039px;top:952px;font:19px/19px DejaVu Sans,sans-serif;color:#ececec;transform:scaleX(1.07);">0.3344</span>
<span class="t" style="left:1150.8px;top:952px;font:19px/19px DejaVu Sans,sans-serif;color:#ececec;transform:scaleX(1.07);">0.3564</span>
<span class="t" style="left:1262.6px;top:952px;font:19px/19px DejaVu Sans,sans-serif;color:#ececec;transform:scaleX(1.07);">0.3773</span>
<span class="t" style="left:1374.3px;top:952px;font:19px/19px DejaVu Sans,sans-serif;color:#ececec;transform:scaleX(1.07);">0.3969</span>
<span class="t" style="left:1486px;top:952px;font:19px/19px DejaVu Sans,sans-serif;color:#ececec;transform:scaleX(1.07);">0.4193</span>
<div style="left:868px;top:976.14px;width:723px;height:32.3px;background:#414141"></div>
<div style="left:848px;top:976.14px;width:20px;height:32.3px;background:linear-gradient(#323232,#1f1f1f);border-top:1px solid #3a3a3a"></div>
<span class="t" style="left:874.2px;top:984px;font:19px/19px DejaVu Sans,sans-serif;color:#f4f4f4;transform:scaleX(1.09);">Target y:CIE31</span>
<span class="t" style="left:1039px;top:984px;font:19px/19px DejaVu Sans,sans-serif;color:#f4f4f4;transform:scaleX(1.07);">0.3648</span>
<span class="t" style="left:1150.8px;top:984px;font:19px/19px DejaVu Sans,sans-serif;color:#f4f4f4;transform:scaleX(1.07);">0.4013</span>
<span class="t" style="left:1262.6px;top:984px;font:19px/19px DejaVu Sans,sans-serif;color:#f4f4f4;transform:scaleX(1.07);">0.4358</span>
<span class="t" style="left:1374.3px;top:984px;font:19px/19px DejaVu Sans,sans-serif;color:#f4f4f4;transform:scaleX(1.07);">0.4682</span>
<span class="t" style="left:1486px;top:984px;font:19px/19px DejaVu Sans,sans-serif;color:#f4f4f4;transform:scaleX(1.07);">0.5053</span>
<div style="left:868px;top:1008.3px;width:723px;height:32.3px;background:#828282"></div>
<div style="left:848px;top:1008.3px;width:20px;height:32.3px;background:linear-gradient(#323232,#1f1f1f);border-top:1px solid #3a3a3a"></div>
<span class="t" style="left:874.2px;top:1016px;font:19px/19px DejaVu Sans,sans-serif;color:#ececec;transform:scaleX(1.07);">Target Y</span>
<span class="t" style="left:1039px;top:1016px;font:19px/19px DejaVu Sans,sans-serif;color:#ececec;transform:scaleX(1.07);">276.5105</span>
<span class="t" style="left:1150.8px;top:1016px;font:19px/19px DejaVu Sans,sans-serif;color:#ececec;transform:scaleX(1.07);">271.6569</span>
<span class="t" style="left:1262.6px;top:1016px;font:19px/19px DejaVu Sans,sans-serif;color:#ececec;transform:scaleX(1.07);">267.9277</span>
<span class="t" style="left:1374.3px;top:1016px;font:19px/19px DejaVu Sans,sans-serif;color:#ececec;transform:scaleX(1.07);">265.0009</span>
<span class="t" style="left:1486px;top:1016px;font:19px/19px DejaVu Sans,sans-serif;color:#ececec;transform:scaleX(1.07);">262.1714</span>
<div style="left:868px;top:1040.46px;width:723px;height:32.3px;background:#414141"></div>
<div style="left:848px;top:1040.46px;width:20px;height:32.3px;background:linear-gradient(#323232,#1f1f1f);border-top:1px solid #3a3a3a"></div>
<span class="t" style="left:874.2px;top:1048px;font:19px/19px DejaVu Sans,sans-serif;color:#f4f4f4;transform:scaleX(1.07);">ΔE 2000</span>
<span class="t" style="left:1039px;top:1048px;font:19px/19px DejaVu Sans,sans-serif;color:#f4f4f4;transform:scaleX(1.07);">1.9956</span>
<span class="t" style="left:1150.8px;top:1048px;font:19px/19px DejaVu Sans,sans-serif;color:#f4f4f4;transform:scaleX(1.07);">1.7521</span>
<span class="t" style="left:1262.6px;top:1048px;font:19px/19px DejaVu Sans,sans-serif;color:#f4f4f4;transform:scaleX(1.07);">1.7535</span>
<span class="t" style="left:1374.3px;top:1048px;font:19px/19px DejaVu Sans,sans-serif;color:#f4f4f4;transform:scaleX(1.07);">1.7252</span>
<span class="t" style="left:1486px;top:1048px;font:19px/19px DejaVu Sans,sans-serif;color:#f4f4f4;transform:scaleX(1.07);">1.7314</span>
<div style="left:868px;top:1072.62px;width:723px;height:32.3px;background:#828282"></div>
<div style="left:848px;top:1072.62px;width:20px;height:32.3px;background:linear-gradient(#323232,#1f1f1f);border-top:1px solid #3a3a3a"></div>
<span class="t" style="left:874.2px;top:1080px;font:19px/19px DejaVu Sans,sans-serif;color:#ececec;transform:scaleX(1.07);">dEITP</span>
<span class="t" style="left:1039px;top:1080px;font:19px/19px DejaVu Sans,sans-serif;color:#ececec;transform:scaleX(1.07);">3.2631</span>
<span class="t" style="left:1150.8px;top:1080px;font:19px/19px DejaVu Sans,sans-serif;color:#ececec;transform:scaleX(1.07);">4.0388</span>
<span class="t" style="left:1262.6px;top:1080px;font:19px/19px DejaVu Sans,sans-serif;color:#ececec;transform:scaleX(1.07);">5.0374</span>
<span class="t" style="left:1374.3px;top:1080px;font:19px/19px DejaVu Sans,sans-serif;color:#ececec;transform:scaleX(1.07);">5.9633</span>
<span class="t" style="left:1486px;top:1080px;font:19px/19px DejaVu Sans,sans-serif;color:#ececec;transform:scaleX(1.07);">7.8357</span>
<div style="left:201px;top:1108px;width:1719px;height:62px;background:linear-gradient(#484848,#3a3a3a 30%,#2a2a2a 65%,#222)"></div>
<div style="left:201.5px;top:1108px;width:44.5px;height:62px;background:linear-gradient(#8a8a8a,#707070 50%,#606060);border-radius:5px 5px 0 0;border:1px solid #999;border-bottom:none"></div>
<div style="left:216px;top:1110px;width:14px;height:14px;border-radius:50%;background:radial-gradient(circle at 50% 40%,#777,#5a5a5a 70%,#686868)"></div>
<svg style="left:219px;top:1112px" width="8" height="5"><path d="M0 5h8L4 0z" fill="#222"/></svg>
<div style="left:206.5px;top:1135px;width:35px;height:28.5px;background:#ffff00;border-radius:3px"></div>
<div style="left:251.6px;top:1108px;width:151px;height:62px;background:linear-gradient(#909090,#787878 50%,#666);border-radius:5px 5px 0 0;border:1px solid #9a9a9a;border-bottom:none"></div>
<div style="left:257.1px;top:1113.5px;width:140px;height:35.5px;background:#c1c1a3;border-radius:4px;box-shadow:0 0 0 1px #888"></div>
<span class="t" style="left:317.19px;top:1155px;font:11px/11px Liberation Sans,sans-serif;color:#262626;transform:scaleX(0.9);text-shadow:0 0 .6px #262626;">20%</span>
<div style="left:403.5px;top:1108px;width:151px;height:62px;background:linear-gradient(#909090,#787878 50%,#666);border-radius:5px 5px 0 0;border:1px solid #9a9a9a;border-bottom:none"></div>
<div style="left:409px;top:1113.5px;width:140px;height:35.5px;background:#c0c087;border-radius:4px;box-shadow:0 0 0 1px #888"></div>
<span class="t" style="left:469.09px;top:1155px;font:11px/11px Liberation Sans,sans-serif;color:#262626;transform:scaleX(0.9);text-shadow:0 0 .6px #262626;">40%</span>
<div style="left:555.4px;top:1108px;width:151px;height:62px;background:linear-gradient(#909090,#787878 50%,#666);border-radius:5px 5px 0 0;border:1px solid #9a9a9a;border-bottom:none"></div>
<div style="left:560.9px;top:1113.5px;width:140px;height:35.5px;background:#c0c069;border-radius:4px;box-shadow:0 0 0 1px #888"></div>
<span class="t" style="left:620.99px;top:1155px;font:11px/11px Liberation Sans,sans-serif;color:#262626;transform:scaleX(0.9);text-shadow:0 0 .6px #262626;">60%</span>
<div style="left:707.3px;top:1108px;width:151px;height:62px;background:linear-gradient(#909090,#787878 50%,#666);border-radius:5px 5px 0 0;border:1px solid #9a9a9a;border-bottom:none"></div>
<div style="left:712.8px;top:1113.5px;width:140px;height:35.5px;background:#c0c049;border-radius:4px;box-shadow:0 0 0 1px #888"></div>
<span class="t" style="left:772.89px;top:1155px;font:11px/11px Liberation Sans,sans-serif;color:#262626;transform:scaleX(0.9);text-shadow:0 0 .6px #262626;">80%</span>
<div style="left:859.2px;top:1108px;width:151px;height:62px;background:linear-gradient(#1a1a1a,#2a2a2a 70%,#333);border-radius:5px 5px 0 0;border:1px solid #111"></div>
<div style="left:864.7px;top:1113.5px;width:140px;height:35.5px;background:#c5c500;border-radius:4px;"></div>
<span class="t" style="left:922.04px;top:1155px;font:bold 11px/11px Liberation Sans,sans-serif;color:#fff;transform:scaleX(0.9);">100%</span>
<div style="left:1646px;top:1120px;width:45.2px;height:19px;background:linear-gradient(#7c7c7c,#606060);border:1px solid #8a8a8a;border-radius:3px 3px 0 0"></div>
<div style="left:1660px;top:1121px;width:17px;height:17px;border-radius:50%;background:radial-gradient(circle at 50% 40%,#666,#4c4c4c 70%,#5a5a5a)"></div>
<div style="left:1691.2px;top:1120px;width:45.2px;height:19px;background:linear-gradient(#7c7c7c,#606060);border:1px solid #8a8a8a;border-radius:3px 3px 0 0"></div>
<div style="left:1705.2px;top:1121px;width:17px;height:17px;border-radius:50%;background:radial-gradient(circle at 50% 40%,#666,#4c4c4c 70%,#5a5a5a)"></div>
<div style="left:1736.4px;top:1120px;width:45.2px;height:19px;background:linear-gradient(#7c7c7c,#606060);border:1px solid #8a8a8a;border-radius:3px 3px 0 0"></div>
<div style="left:1750.4px;top:1121px;width:17px;height:17px;border-radius:50%;background:radial-gradient(circle at 50% 40%,#666,#4c4c4c 70%,#5a5a5a)"></div>
<div style="left:1781.6px;top:1120px;width:45.2px;height:19px;background:linear-gradient(#7c7c7c,#606060);border:1px solid #8a8a8a;border-radius:3px 3px 0 0"></div>
<div style="left:1795.6px;top:1121px;width:17px;height:17px;border-radius:50%;background:radial-gradient(circle at 50% 40%,#666,#4c4c4c 70%,#5a5a5a)"></div>
<div style="left:1826.8px;top:1120px;width:45.2px;height:19px;background:linear-gradient(#7c7c7c,#606060);border:1px solid #8a8a8a;border-radius:3px 3px 0 0"></div>
<div style="left:1840.8px;top:1121px;width:17px;height:17px;border-radius:50%;background:radial-gradient(circle at 50% 40%,#666,#4c4c4c 70%,#5a5a5a)"></div>
<div style="left:1872px;top:1119px;width:20px;height:19px;border-radius:50%;background:#3c3c3c"></div>
<div style="left:1597.5px;top:1130px;width:48px;height:42px;background:linear-gradient(#606060,#4c4c4c);border-radius:5px 5px 0 0;border:1px solid #6c6c6c"></div>
<div style="left:1605.8px;top:1133.3px;width:29px;height:28.6px;background:linear-gradient(#606060,#7c7c7c);border:2px solid #a6a6a6;border-radius:5px;box-shadow:0 0 0 1.5px #333"></div>
<div style="left:1614.6px;top:1140.8px;width:12.8px;height:12.6px;background:#000"></div>
<div style="left:1646px;top:1138.5px;width:136.5px;height:33px;background:linear-gradient(#bdbdbd,#9a9a9a 50%,#868686);border:1px solid #d0d0d0;border-radius:4px 0 0 0"></div>
<div style="left:1782.5px;top:1138.5px;width:139px;height:33px;background:linear-gradient(#bdbdbd,#9a9a9a 50%,#868686);border:1px solid #d0d0d0"></div>
<div style="left:1666px;top:1143.5px;width:21px;height:21px;border-radius:50%;background:radial-gradient(circle at 50% 40%,#8a8a8a,#787878 70%,#909090)"></div>
<div style="left:1879.5px;top:1143.5px;width:21px;height:21px;border-radius:50%;background:radial-gradient(circle at 50% 40%,#8a8a8a,#787878 70%,#909090)"></div>
<span class="t" style="left:1671.77px;top:1146px;font:17px/17px Liberation Sans,sans-serif;color:#333;">«</span>
<span class="t" style="left:1885.27px;top:1146px;font:17px/17px Liberation Sans,sans-serif;color:#333;">»</span>
<span class="t" style="left:1702.5px;top:1143px;font:23px/23px Liberation Sans,sans-serif;color:#3a3a3a;transform:scaleX(1.02);">Back</span>
<span class="t" style="left:1809.5px;top:1143px;font:23px/23px Liberation Sans,sans-serif;color:#3a3a3a;transform:scaleX(1.12);">Next</span>
<div style="left:1203px;top:106px;width:717px;height:697px;background:#1b1b1b"></div>
<div style="left:1210.5px;top:113.5px;width:701.5px;height:680px;background:#323232"></div>
<span class="t" style="left:1517px;top:122px;font:16.5px/16.5px Liberation Sans,sans-serif;color:#ddd;transform:scaleX(0.91);">CIE 1976 u'v'</span>
<div style="left:1249px;top:144px;width:660px;height:615px;background:#242424;border:1px solid #a8a8a8;border-top-width:1.5px;border-bottom:2px solid #9c9c9c"></div>
<div class="cie" style="left:1250px;top:145px;width:658px;height:613px;overflow:hidden">
<div style="left:0;top:0;width:658px;height:613px;clip-path:polygon(281.28px 595.63px,281.16px 595.57px,281.02px 595.63px,280.85px 595.79px,280.57px 595.72px,280.32px 595.77px,280.18px 596.06px,280px 596.23px,279.67px 596.27px,279.18px 596.22px,278.68px 596.19px,278.17px 596.19px,277.53px 596.02px,276.62px 595.5px,275.15px 594.44px,273.34px 592.95px,271.18px 590.96px,268.49px 588.42px,265.2px 585.24px,261.4px 581.34px,257.02px 576.78px,251.98px 571.66px,246.04px 565.69px,239.1px 558.74px,231.26px 550.9px,222.5px 541.96px,212.58px 531.37px,201.6px 518.93px,189.4px 503.9px,174.83px 483.9px,157.58px 457.89px,138.67px 426.78px,118.41px 390.44px,97.38px 349.47px,76.41px 306.02px,56.69px 261.57px,39.88px 218.25px,26.1px 177.93px,15.37px 142.1px,7.88px 111.9px,3.29px 87.12px,1.19px 67.22px,1.34px 51.4px,3.45px 38.71px,7.43px 28.87px,12.96px 21.69px,19.78px 16.92px,27.53px 14.06px,36.02px 12.59px,45.09px 11.89px,54.42px 11.67px,63.76px 11.72px,73.26px 12.03px,83.06px 12.59px,93.28px 13.37px,104px 14.37px,115.27px 15.56px,127.18px 16.94px,139.81px 18.49px,153.21px 20.2px,167.46px 22.08px,182.61px 24.11px,198.71px 26.3px,215.8px 28.65px,233.92px 31.16px,253.08px 33.83px,273.27px 36.65px,294.45px 39.61px,316.58px 42.7px,339.51px 45.89px,363.13px 49.18px,387.26px 52.55px,411.18px 55.9px,434.45px 59.15px,457.52px 62.36px,479.96px 65.49px,500.93px 68.4px,520.51px 71.12px,538.67px 73.65px,555.24px 75.97px,570.17px 78.06px,583.6px 79.93px,595.68px 81.61px,606.54px 83.12px,616.56px 84.52px,625.75px 85.8px,634.04px 86.96px,641.45px 88px,648.02px 88.91px,653.58px 89.69px,658.22px 90.33px,662.29px 90.9px,665.78px 91.39px,668.71px 91.8px,671px 92.12px,672.78px 92.37px,674.41px 92.6px,675.87px 92.8px,677.13px 92.98px,678.35px 93.15px,679.58px 93.32px,680.74px 93.49px,681.71px 93.62px,682.3px 93.7px,682.72px 93.76px,683.04px 93.81px,683.28px 93.84px,683.33px 93.85px)">
<i style="top:8px;left:30px;width:61px;background:linear-gradient(90deg,#00ff00 0,#00ff00 61px)"></i><i style="top:10px;left:22px;width:91px;background:linear-gradient(90deg,#00ff00 0,#00ff00 91px)"></i><i style="top:12px;left:17px;width:113px;background:linear-gradient(90deg,#00ff00 0,#00ff00 113px)"></i><i style="top:14px;left:14px;width:132px;background:linear-gradient(90deg,#00ff00 0,#01ff00 120px,#1bff00 132px)"></i><i style="top:16px;left:11px;width:151px;background:linear-gradient(90deg,#00ff00 0,#02ff00 124px,#41ff00 151px)"></i><i style="top:18px;left:9px;width:168px;background:linear-gradient(90deg,#00ff00 0,#02ff00 126px,#60ff00 165px,#68ff00 168px)"></i><i style="top:20px;left:8px;width:184px;background:linear-gradient(90deg,#00ff00 0,#01ff00 127px,#5fff00 166px,#92ff00 184px)"></i><i style="top:22px;left:6px;width:200px;background:linear-gradient(90deg,#00ff02 0,#00ff00 129px,#5fff00 168px,#beff00 200px)"></i><i style="top:24px;left:5px;width:216px;background:linear-gradient(90deg,#00ff04 0,#00ff00 71px,#02ff00 131px,#62ff00 170px,#c4ff00 203px,#f1ff00 216px)"></i><i style="top:26px;left:4px;width:231px;background:linear-gradient(90deg,#00ff07 0,#00ff00 75px,#01ff00 132px,#61ff00 171px,#c5ff00 204px,#fffe00 221px,#ffdd00 231px)"></i><i style="top:28px;left:3px;width:247px;background:linear-gradient(90deg,#00ff0a 0,#00ff00 91px,#01ff00 133px,#61ff00 172px,#c5ff00 205px,#fffd00 222px,#ffc900 239px,#ffb600 247px)"></i><i style="top:30px;left:2px;width:262px;background:linear-gradient(90deg,#00ff0d 0,#00ff00 107px,#02ff00 135px,#61ff00 173px,#c5ff00 206px,#fffd00 223px,#ffc900 240px,#ff9900 262px)"></i><i style="top:32px;left:1px;width:277px;background:linear-gradient(90deg,#00ff0f 0,#00ff00 125px,#02ff00 136px,#61ff00 174px,#c5ff00 207px,#feff00 223px,#ffc500 242px,#ff9500 265px,#ff8200 277px)"></i><i style="top:34px;left:1px;width:292px;background:linear-gradient(90deg,#00ff12 0,#01ff00 136px,#61ff00 174px,#c6ff00 207px,#ffff00 223px,#ffc700 241px,#ff9600 264px,#ff6e00 292px)"></i><i style="top:36px;left:0px;width:307px;background:linear-gradient(90deg,#00ff15 0,#01ff01 137px,#60ff00 175px,#c3ff00 207px,#ffff00 224px,#ffc900 241px,#ff9800 264px,#ff6c00 295px,#ff5f00 307px)"></i><i style="top:38px;left:0px;width:321px;background:linear-gradient(90deg,#00ff17 0,#02ff04 138px,#63ff00 176px,#c6ff00 208px,#fffe00 224px,#ffc900 241px,#ff9700 264px,#ff6b00 295px,#ff5100 321px)"></i><i style="top:40px;left:0px;width:336px;background:linear-gradient(90deg,#00ff1a 0,#02ff08 138px,#60ff00 175px,#c3ff00 207px,#fffe00 224px,#ffc800 241px,#ff9600 264px,#ff6a00 295px,#ff4500 336px)"></i><i style="top:42px;left:0px;width:350px;background:linear-gradient(90deg,#00ff1d 0,#01ff0b 138px,#60ff04 175px,#c3ff00 207px,#fffd00 224px,#ffc700 241px,#ff9600 264px,#ff6a00 295px,#ff4300 339px,#ff3b00 350px)"></i><i style="top:44px;left:0px;width:364px;background:linear-gradient(90deg,#00ff1f 0,#01ff0f 138px,#5fff08 175px,#c4ff01 207px,#fffc00 224px,#ffc700 241px,#ff9500 264px,#ff6900 295px,#ff4200 339px,#ff3300 364px)"></i><i style="top:46px;left:0px;width:379px;background:linear-gradient(90deg,#00ff22 0,#02ff12 139px,#62ff0c 176px,#c7ff05 208px,#feff02 223px,#ffc600 241px,#ff9500 264px,#ff6900 295px,#ff4100 340px,#ff2b00 379px)"></i><i style="top:48px;left:0px;width:393px;background:linear-gradient(90deg,#00ff25 0,#02ff16 139px,#62ff10 176px,#c4ff0a 207px,#ffff06 223px,#ffc801 240px,#ff9700 262px,#ff6c00 292px,#ff4400 335px,#ff2400 393px)"></i><i style="top:50px;left:0px;width:407px;background:linear-gradient(90deg,#00ff28 0,#01ff1a 139px,#5fff14 175px,#c1ff0f 206px,#fffe0b 223px,#ffca06 239px,#ff9901 261px,#ff6c00 291px,#ff4400 334px,#ff2100 398px,#ff1e00 407px)"></i><i style="top:52px;left:0px;width:422px;background:linear-gradient(90deg,#00ff2a 0,#00ff1d 139px,#5eff18 175px,#c1ff13 206px,#fffe10 223px,#ffca0a 239px,#ff9804 261px,#ff6c00 291px,#ff4400 334px,#ff2100 398px,#ff1800 422px)"></i><i style="top:54px;left:0px;width:436px;background:linear-gradient(90deg,#00ff2d 0,#02ff21 140px,#61ff1c 176px,#c5ff17 207px,#fffd14 223px,#ffc90d 239px,#ff9707 261px,#ff6b01 291px,#ff4300 334px,#ff2000 398px,#ff1300 436px)"></i><i style="top:56px;left:0px;width:450px;background:linear-gradient(90deg,#00ff30 0,#02ff25 140px,#61ff21 176px,#c5ff1c 207px,#fffd19 223px,#ffc811 239px,#ff970a 261px,#ff6a04 291px,#ff4300 334px,#ff2000 398px,#ff0e00 450px)"></i><i style="top:58px;left:0px;width:465px;background:linear-gradient(90deg,#00ff33 0,#01ff29 140px,#61ff25 176px,#c5ff21 207px,#feff1e 222px,#ffc515 240px,#ff940d 262px,#ff6906 292px,#ff4100 335px,#ff1f00 400px,#ff0a00 465px)"></i><i style="top:60px;left:0px;width:479px;background:linear-gradient(90deg,#00ff36 0,#00ff2d 140px,#60ff29 176px,#c6ff25 207px,#ffff23 222px,#ffc719 239px,#ff9511 261px,#ff6909 291px,#ff4202 334px,#ff1f00 398px,#ff0600 479px)"></i><i style="top:62px;left:0px;width:493px;background:linear-gradient(90deg,#00ff38 0,#02ff30 141px,#60ff2d 176px,#c2ff2a 206px,#ffff28 222px,#ffc91e 238px,#ff9915 259px,#ff6c0c 288px,#ff4505 329px,#ff2200 391px,#ff0300 489px,#ff0300 493px)"></i><i style="top:64px;left:0px;width:508px;background:linear-gradient(90deg,#00ff3b 0,#01ff34 141px,#60ff32 176px,#c3ff2f 206px,#fffe2d 222px,#ffc822 238px,#ff9818 259px,#ff6c0f 288px,#ff4407 329px,#ff2100 391px,#ff0300 489px,#ff0000 508px)"></i><i style="top:66px;left:0px;width:522px;background:linear-gradient(90deg,#00ff3e 0,#01ff38 141px,#60ff36 176px,#c3ff34 206px,#fffd32 222px,#ffc826 238px,#ff971b 259px,#ff6b12 288px,#ff4409 329px,#ff2101 391px,#ff0300 489px,#ff0000 522px)"></i><i style="top:68px;left:0px;width:536px;background:linear-gradient(90deg,#00ff41 0,#00ff3c 141px,#5fff3b 176px,#c3ff39 206px,#fffd37 222px,#ffc72a 238px,#ff971f 259px,#ff6a14 288px,#ff430b 329px,#ff2003 391px,#ff0200 490px,#ff0000 536px)"></i><i style="top:70px;left:0px;width:551px;background:linear-gradient(90deg,#00ff44 0,#02ff40 142px,#62ff3f 177px,#c7ff3e 207px,#feff3d 221px,#ffc42e 239px,#ff9422 260px,#ff6817 289px,#ff410d 331px,#ff1f04 394px,#ff0100 495px,#ff0000 551px)"></i><i style="top:72px;left:0px;width:565px;background:linear-gradient(90deg,#00ff47 0,#01ff45 142px,#5fff44 176px,#c4ff43 206px,#feff42 221px,#ffc633 238px,#ff9526 259px,#ff691a 288px,#ff420f 329px,#ff1f06 391px,#ff0200 490px,#ff0000 565px)"></i><i style="top:74px;left:0px;width:579px;background:linear-gradient(90deg,#00ff4a 0,#01ff49 142px,#5fff48 176px,#c4ff48 206px,#ffff47 221px,#ffcb39 236px,#ff9a2b 256px,#ff6d1e 284px,#ff4512 324px,#ff2209 383px,#ff0400 477px,#ff0000 526px,#ff0000 579px)"></i><i style="top:76px;left:0px;width:594px;background:linear-gradient(90deg,#00ff4d 0,#02ff4d 143px,#61ff4d 177px,#c4ff4d 206px,#fffe4d 221px,#ffca3d 236px,#ff9a2e 256px,#ff6d21 284px,#ff4515 324px,#ff220a 383px,#ff0401 477px,#ff0000 528px,#ff0000 594px)"></i><i style="top:78px;left:0px;width:608px;background:linear-gradient(90deg,#00ff50 0,#02ff51 143px,#61ff52 177px,#c5ff52 206px,#fffe52 221px,#ffc941 236px,#ff9932 256px,#ff6c24 284px,#ff4417 324px,#ff210c 383px,#ff0302 477px,#ff0000 538px,#ff0000 608px)"></i><i style="top:80px;left:0px;width:623px;background:linear-gradient(90deg,#00ff53 0,#01ff55 143px,#61ff56 177px,#c5ff57 206px,#fffd57 221px,#ffc946 236px,#ff9835 256px,#ff6c26 284px,#ff4419 324px,#ff210d 383px,#ff0303 477px,#ff0000 557px,#ff0000 623px)"></i><i style="top:82px;left:0px;width:637px;background:linear-gradient(90deg,#00ff56 0,#00ff5a 143px,#61ff5b 177px,#c5ff5c 206px,#fffc5c 221px,#ffc84a 236px,#ff9839 256px,#ff6b29 284px,#ff431b 324px,#ff200f 384px,#ff0204 479px,#ff0000 633px,#ff0000 637px)"></i><i style="top:84px;left:0px;width:651px;background:linear-gradient(90deg,#00ff59 0,#02ff5e 144px,#60ff60 177px,#c5ff62 206px,#feff63 220px,#ffc44d 237px,#ff933b 258px,#ff672b 287px,#ff3f1c 328px,#ff1d10 390px,#ff0005 488px,#ff0000 643px,#ff0000 651px)"></i><i style="top:86px;left:0px;width:658px;background:linear-gradient(90deg,#00ff5c 0,#02ff62 144px,#60ff65 177px,#c2ff67 205px,#ffff69 220px,#ffc954 235px,#ff9841 255px,#ff6c30 282px,#ff4421 321px,#ff2113 379px,#ff0307 471px,#ff0003 530px,#ff0000 658px)"></i><i style="top:88px;left:1px;width:657px;background:linear-gradient(90deg,#00ff5f 0,#01ff67 143px,#60ff6a 176px,#c2ff6d 204px,#ffff6e 219px,#ffc959 234px,#ff9845 254px,#ff6c33 281px,#ff4423 320px,#ff2115 378px,#ff0309 470px,#ff0002 556px,#ff0000 657px)"></i><i style="top:90px;left:1px;width:657px;background:linear-gradient(90deg,#00ff62 0,#00ff6b 143px,#60ff6f 176px,#c2ff72 204px,#fffe74 219px,#ffc85d 234px,#ff9748 254px,#ff6b36 281px,#ff4325 320px,#ff2016 378px,#ff020a 471px,#ff0000 657px)"></i><i style="top:92px;left:1px;width:657px;background:linear-gradient(90deg,#00ff66 0,#02ff70 144px,#63ff74 177px,#c7ff78 205px,#fffd79 219px,#ffc762 234px,#ff964c 254px,#ff6a39 281px,#ff4327 320px,#ff2018 378px,#ff020b 471px,#ff0000 657px)"></i><i style="top:94px;left:1px;width:657px;background:linear-gradient(90deg,#00ff69 0,#01ff75 144px,#5fff79 176px,#c3ff7d 204px,#fffd7f 219px,#ffc766 234px,#ff9550 254px,#ff6a3c 281px,#ff422a 320px,#ff201a 378px,#ff020c 471px,#ff0000 657px)"></i><i style="top:96px;left:2px;width:656px;background:linear-gradient(90deg,#00ff6c 0,#01ff79 143px,#5fff7e 175px,#c3ff83 203px,#feff86 217px,#ffc369 234px,#ff9353 254px,#ff663d 282px,#ff3f2b 322px,#ff1d1b 382px,#ff000d 476px,#ff0000 656px)"></i><i style="top:98px;left:2px;width:656px;background:linear-gradient(90deg,#00ff6f 0,#00ff7e 143px,#5fff83 175px,#c4ff89 203px,#feff8c 217px,#ffc871 232px,#ff9859 251px,#ff6c44 277px,#ff4530 314px,#ff221f 370px,#ff0410 459px,#ff000a 512px,#ff0001 656px)"></i><i style="top:100px;left:2px;width:656px;background:linear-gradient(90deg,#00ff72 0,#02ff83 144px,#62ff89 176px,#c4ff8f 203px,#ffff92 217px,#ffcb77 231px,#ff995e 250px,#ff6d47 276px,#ff4533 313px,#ff2221 368px,#ff0412 455px,#ff000d 500px,#ff0002 656px)"></i><i style="top:102px;left:3px;width:655px;background:linear-gradient(90deg,#00ff76 0,#01ff88 143px,#61ff8e 175px,#c4ff95 202px,#fffe98 216px,#ffca7c 230px,#ff9962 249px,#ff6c4b 275px,#ff4535 312px,#ff2223 367px,#ff0413 455px,#ff000d 506px,#ff0003 655px)"></i><i style="top:104px;left:3px;width:655px;background:linear-gradient(90deg,#00ff79 0,#01ff8d 143px,#61ff93 175px,#c4ff9b 202px,#fffe9e 216px,#ffc981 230px,#ff9866 249px,#ff6c4e 275px,#ff4438 312px,#ff2125 367px,#ff0314 455px,#ff000d 523px,#ff0004 655px)"></i><i style="top:106px;left:4px;width:654px;background:linear-gradient(90deg,#00ff7d 0,#00ff91 142px,#5dff99 173px,#c1ffa0 200px,#fffda4 215px,#ffc886 229px,#ff976a 248px,#ff6b51 274px,#ff433a 311px,#ff2126 366px,#ff0315 454px,#ff0009 577px,#ff0004 654px)"></i><i style="top:108px;left:4px;width:654px;background:linear-gradient(90deg,#00ff80 0,#02ff97 143px,#61ff9e 174px,#c5ffa7 201px,#fdffab 214px,#ffc489 230px,#ff946d 249px,#ff6953 275px,#ff413c 313px,#ff1e27 370px,#ff0116 461px,#ff0005 654px)"></i><i style="top:110px;left:4px;width:654px;background:linear-gradient(90deg,#00ff83 0,#01ff9c 143px,#60ffa4 174px,#c5ffad 201px,#feffb2 214px,#ffc790 229px,#ff9672 248px,#ff6a57 274px,#ff423f 311px,#ff1f2a 367px,#ff0218 456px,#ff0006 654px)"></i><i style="top:112px;left:5px;width:653px;background:linear-gradient(90deg,#00ff87 0,#00ffa1 142px,#60ffaa 173px,#c2ffb3 199px,#ffffb9 213px,#ffc997 227px,#ff9979 245px,#ff6d5d 270px,#ff4544 306px,#ff222e 359px,#ff041b 444px,#ff0014 489px,#ff0007 653px)"></i><i style="top:114px;left:5px;width:653px;background:linear-gradient(90deg,#00ff8a 0,#00ffa5 141px,#14ffa8 149px,#75ffb2 179px,#d7ffbb 204px,#ffffbf 213px,#ffc89c 227px,#ff997d 245px,#ff6c60 270px,#ff4446 306px,#ff2230 359px,#ff031c 444px,#ff0014 497px,#ff0007 653px)"></i><i style="top:116px;left:6px;width:652px;background:linear-gradient(90deg,#00ff8e 0,#00ffaa 137px,#02ffab 142px,#5fffb5 172px,#c2ffc0 198px,#fffec5 212px,#ffc8a1 226px,#ff9881 244px,#ff6c63 269px,#ff4449 305px,#ff2131 359px,#ff031d 444px,#ff0010 545px,#ff0008 652px)"></i><i style="top:118px;left:6px;width:652px;background:linear-gradient(90deg,#00ff91 0,#00ffae 134px,#01ffb0 142px,#5fffbb 172px,#c2ffc6 198px,#fffdcc 212px,#ffc7a6 226px,#ff9785 244px,#ff6b67 269px,#ff434b 305px,#ff2033 359px,#ff021e 445px,#ff000a 638px,#ff0009 652px)"></i><i style="top:120px;left:7px;width:651px;background:linear-gradient(90deg,#00ff95 0,#00ffb2 130px,#00ffb6 141px,#5fffc1 171px,#c3ffcd 197px,#fffcd2 211px,#ffc6ab 225px,#ff9689 243px,#ff6a6a 268px,#ff434e 304px,#ff2035 358px,#ff0220 444px,#ff000b 633px,#ff000a 651px)"></i><i style="top:122px;left:7px;width:651px;background:linear-gradient(90deg,#00ff99 0,#00ffb6 127px,#02ffbb 142px,#62ffc7 172px,#c7ffd4 198px,#feffdb 210px,#ffc5b1 225px,#ff958d 243px,#ff696d 268px,#ff4250 304px,#ff1f37 358px,#ff0121 444px,#ff000c 630px,#ff000a 651px)"></i><i style="top:124px;left:7px;width:651px;background:linear-gradient(90deg,#00ff9c 0,#00ffbb 125px,#02ffc1 142px,#62ffcd 172px,#c3ffda 197px,#feffe2 210px,#ffc8b8 224px,#ff9793 242px,#ff6a72 267px,#ff4354 302px,#ff203a 355px,#ff0223 439px,#ff000e 616px,#ff000b 651px)"></i><i style="top:126px;left:8px;width:650px;background:linear-gradient(90deg,#00ffa0 0,#00ffbf 122px,#01ffc6 141px,#5effd3 170px,#bfffe0 195px,#ffffe9 209px,#ffcac0 222px,#ff9899 240px,#ff6c77 264px,#ff4559 298px,#ff223e 349px,#ff0426 430px,#ff001e 473px,#ff000c 650px)"></i><i style="top:128px;left:8px;width:650px;background:linear-gradient(90deg,#00ffa4 0,#00ffc3 119px,#00ffcc 141px,#5effd9 170px,#c0ffe7 195px,#fffef0 209px,#ffcac6 222px,#ff9aa0 239px,#ff6d7c 263px,#ff455c 297px,#ff2240 348px,#ff0428 429px,#ff0020 472px,#ff000d 650px)"></i><i style="top:130px;left:9px;width:649px;background:linear-gradient(90deg,#00ffa7 0,#00ffc8 116px,#02ffd2 141px,#61ffe0 170px,#c4ffef 195px,#fffdf7 208px,#ffc9cb 221px,#ff99a4 238px,#ff6c7f 262px,#ff455f 296px,#ff2242 347px,#ff0329 428px,#ff001f 480px,#ff000e 649px)"></i><i style="top:132px;left:9px;width:649px;background:linear-gradient(90deg,#00ffab 0,#00ffcc 114px,#01ffd8 141px,#61ffe6 170px,#c5fff6 195px,#fffdfd 208px,#ffc8d1 221px,#ff98a9 238px,#ff6c83 262px,#ff4461 296px,#ff2144 347px,#ff032a 428px,#ff001e 499px,#ff000e 649px)"></i><i style="top:134px;left:10px;width:646px;background:linear-gradient(90deg,#00ffaf 0,#00ffd1 112px,#01ffdd 140px,#60ffed 169px,#c5fffd 194px,#fef6ff 208px,#ffbdce 223px,#ff8fa5 241px,#ff6480 266px,#ff3d5f 302px,#ff1b41 357px,#ff0029 439px,#ff0013 605px,#ff000f 646px)"></i><i style="top:136px;left:10px;width:644px;background:linear-gradient(90deg,#00ffb3 0,#00ffd5 109px,#00ffe3 140px,#5cfff3 168px,#b2fcff 190px,#ffedff 210px,#ffb9d0 224px,#ff8aa6 243px,#ff5f80 269px,#ff395e 307px,#ff1740 365px,#ff002a 441px,#ff0013 606px,#ff0010 644px)"></i><i style="top:138px;left:11px;width:642px;background:linear-gradient(90deg,#00ffb7 0,#00ffda 107px,#02ffea 140px,#60fffa 168px,#97faff 183px,#ffe4fd 211px,#ffb0ce 226px,#ff81a3 246px,#ff577c 274px,#ff315a 315px,#ff113d 378px,#ff002b 442px,#ff0014 607px,#ff0011 642px)"></i><i style="top:140px;left:12px;width:639px;background:linear-gradient(90deg,#00ffbb 0,#00ffde 105px,#01ffef 139px,#62fdff 168px,#fedeff 211px,#ffa9ce 227px,#ff7ba2 248px,#ff517b 277px,#ff2d59 320px,#ff0d3b 386px,#ff002d 440px,#ff0015 601px,#ff0012 639px)"></i><i style="top:142px;left:12px;width:638px;background:linear-gradient(90deg,#00ffbf 0,#00ffe3 103px,#00fff5 139px,#41fcff 159px,#f1d9ff 209px,#ffd6ff 213px,#ffa3cd 229px,#ff76a2 250px,#ff4d7b 280px,#ff2a59 324px,#ff0a3b 393px,#ff002e 440px,#ff0016 599px,#ff0013 638px)"></i><i style="top:144px;left:13px;width:635px;background:linear-gradient(90deg,#00ffc3 0,#00ffe8 101px,#00fffc 138px,#3ff6ff 158px,#eed3ff 209px,#ffcefd 214px,#ff9dcd 230px,#ff70a1 252px,#ff497a 283px,#ff2557 329px,#ff0739 402px,#ff002f 440px,#ff0017 598px,#ff0014 635px)"></i><i style="top:146px;left:13px;width:633px;background:linear-gradient(90deg,#00ffc7 0,#00ffec 99px,#00fcff 138px,#92deff 184px,#fec9ff 215px,#ff95cb 233px,#ff699f 256px,#ff4277 289px,#ff2054 338px,#ff0236 416px,#ff001d 551px,#ff0015 633px)"></i><i style="top:148px;left:14px;width:631px;background:linear-gradient(90deg,#00ffcb 0,#00fff1 97px,#00fcff 127px,#01f6ff 138px,#add3ff 192px,#ffc1fe 216px,#ff92cd 233px,#ff67a1 256px,#ff4179 289px,#ff1f56 338px,#ff0238 416px,#ff001e 550px,#ff0016 631px)"></i><i style="top:150px;left:14px;width:629px;background:linear-gradient(90deg,#00ffcf 0,#00fff6 96px,#00fcff 118px,#00f0ff 138px,#accdff 193px,#ffbafd 218px,#ff8ccd 235px,#ff62a0 259px,#ff3c78 293px,#ff1b55 344px,#ff0037 422px,#ff001e 559px,#ff0017 629px)"></i><i style="top:152px;left:15px;width:627px;background:linear-gradient(90deg,#00ffd4 0,#00fffb 94px,#00f9ff 112px,#02eaff 138px,#aec6ff 194px,#feb5ff 218px,#ff85cb 237px,#ff5d9f 261px,#ff3877 296px,#ff1854 348px,#ff0039 422px,#ff001f 558px,#ff0018 627px)"></i><i style="top:154px;left:15px;width:625px;background:linear-gradient(90deg,#00ffd8 0,#00fdff 96px,#02e5ff 138px,#aec0ff 195px,#ffaffe 220px,#ff82cd 238px,#ff5ba1 262px,#ff3779 297px,#ff1756 349px,#ff003a 421px,#ff0020 555px,#ff0019 625px)"></i><i style="top:156px;left:16px;width:622px;background:linear-gradient(90deg,#00ffdc 0,#00fdff 85px,#01dfff 137px,#adbbff 195px,#ffa8fd 221px,#ff7dcd 239px,#ff56a0 264px,#ff3479 299px,#ff1556 352px,#ff003c 420px,#ff0022 552px,#ff001a 622px)"></i><i style="top:158px;left:17px;width:620px;background:linear-gradient(90deg,#00ffe1 0,#00fcff 75px,#00daff 136px,#acb6ff 195px,#ffa4ff 221px,#ff79cd 240px,#ff53a1 265px,#ff3179 301px,#ff1356 355px,#ff003d 418px,#ff0023 548px,#ff001b 620px)"></i><i style="top:160px;left:17px;width:618px;background:linear-gradient(90deg,#00ffe5 0,#00fcff 65px,#02d5ff 137px,#aeb0ff 197px,#ff9efe 223px,#ff74cd 242px,#ff4fa0 268px,#ff2d78 305px,#ff1055 360px,#ff003f 418px,#ff0024 546px,#ff001c 618px)"></i><i style="top:162px;left:18px;width:616px;background:linear-gradient(90deg,#00ffe9 0,#00fdff 54px,#01d0ff 136px,#aeabff 197px,#ff98fd 224px,#ff70cd 243px,#ff4ca0 269px,#ff2b79 306px,#ff0f56 361px,#ff0041 415px,#ff0026 540px,#ff001d 616px)"></i><i style="top:164px;left:18px;width:614px;background:linear-gradient(90deg,#00ffee 0,#00fcff 45px,#01ccff 136px,#ada6ff 198px,#ff94ff 225px,#ff6ccd 245px,#ff48a0 272px,#ff2878 310px,#ff0c55 367px,#ff0043 414px,#ff0028 537px,#ff001e 614px)"></i><i style="top:166px;left:19px;width:611px;background:linear-gradient(90deg,#00fff2 0,#00fcff 34px,#02c7ff 136px,#afa1ff 199px,#ff8ffe 226px,#ff68cc 246px,#ff45a0 273px,#ff2678 312px,#ff0a55 370px,#ff0045 412px,#ff0029 533px,#ff001f 611px)"></i><i style="top:168px;left:20px;width:609px;background:linear-gradient(90deg,#00fff7 0,#00fbff 25px,#02c3ff 135px,#af9cff 199px,#ff89fd 227px,#ff64cc 247px,#ff419f 275px,#ff2378 314px,#ff0855 373px,#ff0046 411px,#ff002a 530px,#ff0020 609px)"></i><i style="top:170px;left:20px;width:607px;background:linear-gradient(90deg,#00fffc 0,#00f5ff 28px,#01bfff 135px,#ae98ff 200px,#ff86ff 228px,#ff60cc 249px,#ff3fa0 277px,#ff2178 317px,#ff0655 377px,#ff0048 411px,#ff002c 529px,#ff0021 607px)"></i><i style="top:172px;left:21px;width:605px;background:linear-gradient(90deg,#00fdff 0,#00bbff 134px,#ad94ff 200px,#ff81fe 229px,#ff5ccc 250px,#ff3ca0 278px,#ff1f79 318px,#ff0556 378px,#ff0049 411px,#ff002d 528px,#ff0022 605px)"></i><i style="top:174px;left:21px;width:603px;background:linear-gradient(90deg,#00f9ff 0,#02b6ff 135px,#af8fff 202px,#ff7cfd 231px,#ff59cc 252px,#ff399f 281px,#ff1c78 322px,#ff0355 383px,#ff0043 433px,#ff0028 565px,#ff0023 603px)"></i><i style="top:176px;left:22px;width:600px;background:linear-gradient(90deg,#00f4ff 0,#01b2ff 134px,#af8bff 202px,#ff79ff 231px,#ff56ce 252px,#ff37a1 281px,#ff1b79 322px,#ff0256 383px,#ff0038 480px,#ff0024 600px)"></i><i style="top:178px;left:23px;width:598px;background:linear-gradient(90deg,#00f0ff 0,#01afff 133px,#ae87ff 202px,#ff74fe 232px,#ff52cc 254px,#ff339f 284px,#ff1878 326px,#ff0055 389px,#ff0037 489px,#ff0025 598px)"></i><i style="top:180px;left:23px;width:596px;background:linear-gradient(90deg,#00ecff 0,#03abff 134px,#b083ff 204px,#ff6ffd 234px,#ff4ecc 256px,#ff31a0 286px,#ff1678 329px,#ff0055 392px,#ff0037 493px,#ff0026 596px)"></i><i style="top:182px;left:24px;width:594px;background:linear-gradient(90deg,#00e7ff 0,#02a7ff 133px,#af7fff 204px,#ff6dff 234px,#ff4cce 256px,#ff2fa1 286px,#ff1579 329px,#ff0057 390px,#ff0039 489px,#ff0027 594px)"></i><i style="top:184px;left:25px;width:591px;background:linear-gradient(90deg,#00e3ff 0,#01a4ff 132px,#af7bff 204px,#ff68fe 235px,#ff49ce 257px,#ff2ca1 288px,#ff1278 332px,#ff0059 389px,#ff003a 487px,#ff0028 591px)"></i><i style="top:186px;left:25px;width:589px;background:linear-gradient(90deg,#00dfff 0,#01a1ff 132px,#ae78ff 205px,#ff64fd 237px,#ff45cc 260px,#ff29a0 291px,#ff1078 336px,#ff005b 388px,#ff003c 485px,#ff0029 589px)"></i><i style="top:188px;left:26px;width:587px;background:linear-gradient(90deg,#00dbff 0,#029dff 132px,#ad75ff 205px,#ff62ff 237px,#ff43ce 260px,#ff28a1 291px,#ff0f79 336px,#ff005d 385px,#ff003e 480px,#ff002a 587px)"></i><i style="top:190px;left:27px;width:584px;background:linear-gradient(90deg,#00d7ff 0,#029aff 131px,#ad71ff 205px,#ff5dfe 238px,#ff40ce 261px,#ff25a1 293px,#ff0d79 338px,#ff0060 383px,#ff0040 476px,#ff002b 584px)"></i><i style="top:192px;left:27px;width:583px;background:linear-gradient(90deg,#00d4ff 0,#0197ff 131px,#ac6eff 206px,#ff5afd 240px,#ff3ccc 264px,#ff229f 297px,#ff0a77 344px,#ff0062 382px,#ff0042 474px,#ff002c 583px)"></i><i style="top:194px;left:28px;width:580px;background:linear-gradient(90deg,#00d0ff 0,#0094ff 130px,#ac6bff 206px,#ff56fc 241px,#ff39cc 265px,#ff209f 298px,#ff0978 345px,#ff0063 381px,#ff0043 472px,#ff002e 580px)"></i><i style="top:196px;left:29px;width:577px;background:linear-gradient(90deg,#00ccff 0,#0291ff 130px,#ae67ff 207px,#ff54fe 241px,#ff38cd 265px,#ff1fa1 298px,#ff0879 345px,#ff0066 378px,#ff0045 467px,#ff002f 577px)"></i><i style="top:198px;left:29px;width:576px;background:linear-gradient(90deg,#00c9ff 0,#018eff 130px,#ad65ff 208px,#ff50fd 243px,#ff34cc 268px,#ff1b9f 302px,#ff0578 350px,#ff0067 380px,#ff0046 469px,#ff0030 576px)"></i><i style="top:200px;left:30px;width:573px;background:linear-gradient(90deg,#00c6ff 0,#018bff 129px,#ac62ff 208px,#ff4cfc 244px,#ff32cc 269px,#ff1aa0 303px,#ff0478 352px,#ff0065 385px,#ff0045 477px,#ff0031 573px)"></i><i style="top:202px;left:31px;width:571px;background:linear-gradient(90deg,#00c2ff 0,#0288ff 129px,#ae5eff 209px,#ff4afe 244px,#ff30cd 269px,#ff18a0 304px,#ff0378 353px,#ff0055 426px,#ff0037 542px,#ff0032 571px)"></i><i style="top:204px;left:31px;width:569px;background:linear-gradient(90deg,#00bfff 0,#0285ff 129px,#ae5cff 210px,#ff47fd 246px,#ff2dcb 272px,#ff169f 307px,#ff0178 357px,#ff0055 432px,#ff0037 551px,#ff0033 569px)"></i><i style="top:206px;left:32px;width:566px;background:linear-gradient(90deg,#00bcff 0,#0183ff 128px,#ad59ff 210px,#ff44fc 247px,#ff2acb 273px,#ff139f 309px,#ff0077 360px,#ff0054 436px,#ff0036 557px,#ff0035 566px)"></i><i style="top:208px;left:33px;width:564px;background:linear-gradient(90deg,#00b8ff 0,#0180ff 127px,#ad56ff 210px,#ff42fe 247px,#ff29cd 273px,#ff12a0 309px,#ff0078 360px,#ff0055 436px,#ff0037 557px,#ff0036 564px)"></i><i style="top:210px;left:33px;width:562px;background:linear-gradient(90deg,#00b6ff 0,#027dff 128px,#ae53ff 212px,#ff3ffd 249px,#ff26cb 276px,#ff109f 313px,#ff007a 360px,#ff0057 436px,#ff0038 556px,#ff0037 562px)"></i><i style="top:212px;left:34px;width:560px;background:linear-gradient(90deg,#00b2ff 0,#027bff 127px,#ae51ff 212px,#ff3bfd 250px,#ff24cb 277px,#ff0e9f 314px,#ff007d 357px,#ff0059 431px,#ff003b 547px,#ff0038 560px)"></i><i style="top:214px;left:35px;width:557px;background:linear-gradient(90deg,#00afff 0,#0179ff 126px,#ad4eff 212px,#ff3afe 250px,#ff22cd 277px,#ff0da0 314px,#ff0080 355px,#ff005b 428px,#ff003c 542px,#ff0039 557px)"></i><i style="top:216px;left:36px;width:554px;background:linear-gradient(90deg,#00acff 0,#0276ff 126px,#af4bff 213px,#ff37fd 251px,#ff20cd 278px,#ff0ba0 316px,#ff0082 353px,#ff005e 425px,#ff003e 537px,#ff003b 554px)"></i><i style="top:218px;left:36px;width:553px;background:linear-gradient(90deg,#00aaff 0,#0274ff 126px,#ae49ff 214px,#ff34fd 253px,#ff1dcb 281px,#ff099f 319px,#ff0085 352px,#ff0060 422px,#ff0040 531px,#ff003c 553px)"></i><i style="top:220px;left:37px;width:550px;background:linear-gradient(90deg,#00a7ff 0,#0172ff 125px,#ae47ff 214px,#ff32fe 253px,#ff1ccd 281px,#ff08a0 319px,#ff0087 350px,#ff0062 419px,#ff0042 526px,#ff003d 550px)"></i><i style="top:222px;left:38px;width:548px;background:linear-gradient(90deg,#00a4ff 0,#0170ff 124px,#ad45ff 214px,#ff2ffd 254px,#ff1acd 282px,#ff06a0 321px,#ff0089 349px,#ff0064 418px,#ff0044 524px,#ff003e 548px)"></i><i style="top:224px;left:38px;width:546px;background:linear-gradient(90deg,#00a2ff 0,#026dff 125px,#af42ff 216px,#ff2dfd 256px,#ff17cb 285px,#ff049e 325px,#ff0088 354px,#ff0062 425px,#ff0042 534px,#ff0040 546px)"></i><i style="top:226px;left:39px;width:543px;background:linear-gradient(90deg,#009fff 0,#026bff 124px,#ae40ff 216px,#ff2bfe 256px,#ff16cc 285px,#ff03a0 325px,#ff0081 366px,#ff005d 443px,#ff0041 543px)"></i><i style="top:228px;left:40px;width:541px;background:linear-gradient(90deg,#009cff 0,#0169ff 123px,#ae3eff 216px,#ff29fd 257px,#ff14cc 286px,#ff02a0 326px,#ff0078 383px,#ff0055 468px,#ff0042 541px)"></i><i style="top:230px;left:41px;width:538px;background:linear-gradient(90deg,#0099ff 0,#0267ff 123px,#af3bff 217px,#ff26fd 258px,#ff12cb 288px,#ff009f 329px,#ff0077 387px,#ff0054 474px,#ff0044 538px)"></i><i style="top:232px;left:41px;width:537px;background:linear-gradient(90deg,#0097ff 0,#0265ff 123px,#af39ff 218px,#ff24fe 259px,#ff11cc 289px,#ff00a0 330px,#ff0078 388px,#ff0055 475px,#ff0045 537px)"></i><i style="top:234px;left:42px;width:534px;background:linear-gradient(90deg,#0095ff 0,#0163ff 122px,#ae37ff 218px,#ff22fd 260px,#ff0fcc 290px,#ff00a0 331px,#ff0078 390px,#ff0055 478px,#ff0046 534px)"></i><i style="top:236px;left:43px;width:531px;background:linear-gradient(90deg,#0092ff 0,#0162ff 121px,#ae35ff 218px,#ff20fd 261px,#ff0dcb 292px,#ff00a3 329px,#ff007b 387px,#ff0057 473px,#ff0048 531px)"></i><i style="top:238px;left:44px;width:529px;background:linear-gradient(90deg,#0090ff 0,#025fff 121px,#af33ff 219px,#ff1efe 261px,#ff0ccc 292px,#ff00a7 326px,#ff007e 383px,#ff005a 467px,#ff0049 529px)"></i><i style="top:240px;left:44px;width:527px;background:linear-gradient(90deg,#008eff 0,#025eff 121px,#af31ff 220px,#ff1cfd 263px,#ff0acc 294px,#ff00aa 325px,#ff0081 381px,#ff005d 463px,#ff004b 527px)"></i><i style="top:242px;left:45px;width:525px;background:linear-gradient(90deg,#008bff 0,#015cff 120px,#af2fff 220px,#ff1afd 264px,#ff08cb 296px,#ff00ad 323px,#ff0084 378px,#ff005f 459px,#ff004c 525px)"></i><i style="top:244px;left:46px;width:522px;background:linear-gradient(90deg,#0089ff 0,#025aff 120px,#b02dff 221px,#ff18fe 264px,#ff07cc 296px,#ff00af 322px,#ff0086 376px,#ff0061 456px,#ff004d 522px)"></i><i style="top:246px;left:47px;width:519px;background:linear-gradient(90deg,#0087ff 0,#0258ff 119px,#af2bff 221px,#ff16fd 265px,#ff05cc 297px,#ff00b0 322px,#ff0087 376px,#ff0062 455px,#ff004f 519px)"></i><i style="top:248px;left:47px;width:518px;background:linear-gradient(90deg,#0085ff 0,#0257ff 119px,#af2aff 222px,#ff14fd 267px,#ff03cb 300px,#ff00a6 335px,#ff007e 395px,#ff005a 484px,#ff0050 518px)"></i><i style="top:250px;left:48px;width:515px;background:linear-gradient(90deg,#0082ff 0,#0155ff 118px,#af28ff 222px,#ff13fe 267px,#ff02cc 300px,#ff009f 345px,#ff0077 409px,#ff0054 505px,#ff0052 515px)"></i><i style="top:252px;left:49px;width:513px;background:linear-gradient(90deg,#0080ff 0,#0253ff 118px,#b026ff 223px,#ff11fd 268px,#ff01cc 301px,#ff00a0 346px,#ff0077 411px,#ff0054 508px,#ff0053 513px)"></i><i style="top:254px;left:50px;width:510px;background:linear-gradient(90deg,#007eff 0,#0252ff 117px,#af24ff 223px,#ff0ffd 269px,#ff00cb 303px,#ff009e 349px,#ff0077 415px,#ff0055 510px)"></i><i style="top:256px;left:51px;width:507px;background:linear-gradient(90deg,#007cff 0,#0150ff 116px,#af23ff 223px,#ff0efe 269px,#ff00cc 303px,#ff009f 349px,#ff0077 415px,#ff0056 507px)"></i><i style="top:258px;left:52px;width:505px;background:linear-gradient(90deg,#007aff 0,#034eff 116px,#af21ff 223px,#ff0cfd 270px,#ff00cf 301px,#ff00a2 347px,#ff007a 412px,#ff0058 505px)"></i><i style="top:260px;left:52px;width:503px;background:linear-gradient(90deg,#0078ff 0,#024dff 116px,#ae20ff 224px,#ff0afd 272px,#ff00d3 300px,#ff00a6 345px,#ff007d 409px,#ff0059 503px)"></i><i style="top:262px;left:53px;width:501px;background:linear-gradient(90deg,#0076ff 0,#024cff 115px,#ae1eff 224px,#ff09fe 272px,#ff00d7 298px,#ff00a9 342px,#ff0080 404px,#ff005c 496px,#ff005b 501px)"></i><i style="top:264px;left:54px;width:498px;background:linear-gradient(90deg,#0074ff 0,#014aff 114px,#ad1dff 224px,#ff07fd 273px,#ff00db 296px,#ff00ad 339px,#ff0083 400px,#ff005f 490px,#ff005c 498px)"></i><i style="top:266px;left:55px;width:495px;background:linear-gradient(90deg,#0072ff 0,#0248ff 114px,#af1bff 225px,#ff05fd 274px,#ff00dc 296px,#ff00ae 339px,#ff0084 400px,#ff0060 489px,#ff005e 495px)"></i><i style="top:268px;left:56px;width:493px;background:linear-gradient(90deg,#0070ff 0,#0247ff 113px,#ae1aff 225px,#ff04fe 274px,#ff00dc 297px,#ff00ad 341px,#ff0084 403px,#ff005f 493px)"></i><i style="top:270px;left:57px;width:490px;background:linear-gradient(90deg,#006eff 0,#0246ff 112px,#ae18ff 225px,#ff02fd 275px,#ff00cc 311px,#ff009f 360px,#ff0077 430px,#ff0061 490px)"></i><i style="top:272px;left:57px;width:488px;background:linear-gradient(90deg,#006dff 0,#0145ff 112px,#ad17ff 226px,#ff01fd 277px,#ff00cc 313px,#ff009f 363px,#ff0077 434px,#ff0063 488px)"></i><i style="top:274px;left:58px;width:486px;background:linear-gradient(90deg,#006bff 0,#0243ff 112px,#af15ff 227px,#ff00fe 277px,#ff00cd 313px,#ff00a0 363px,#ff0078 434px,#ff0064 486px)"></i><i style="top:276px;left:59px;width:483px;background:linear-gradient(90deg,#0069ff 0,#0242ff 111px,#ae14ff 227px,#ff00fd 278px,#ff00cc 315px,#ff009f 366px,#ff0077 438px,#ff0066 483px)"></i><i style="top:278px;left:60px;width:481px;background:linear-gradient(90deg,#0067ff 0,#0141ff 110px,#ae13ff 227px,#fe00ff 277px,#ff00c9 318px,#ff009d 370px,#ff0075 444px,#ff0067 481px)"></i><i style="top:280px;left:61px;width:478px;background:linear-gradient(90deg,#0066ff 0,#023fff 110px,#af11ff 228px,#fa00ff 275px,#ff00fb 281px,#ff00c9 319px,#ff009d 371px,#ff0075 446px,#ff0069 478px)"></i><i style="top:282px;left:62px;width:475px;background:linear-gradient(90deg,#0064ff 0,#023eff 109px,#af10ff 228px,#f400ff 272px,#ff00fc 281px,#ff00ca 319px,#ff009e 371px,#ff0076 446px,#ff006b 475px)"></i><i style="top:284px;left:63px;width:473px;background:linear-gradient(90deg,#0062ff 0,#023dff 108px,#ae0fff 228px,#f000ff 270px,#ff00fd 281px,#ff00cb 319px,#ff009f 371px,#ff0077 445px,#ff006d 473px)"></i><i style="top:286px;left:63px;width:471px;background:linear-gradient(90deg,#0061ff 0,#013cff 108px,#ae0dff 229px,#ea00ff 268px,#ff00fc 283px,#ff00ca 322px,#ff009e 375px,#ff0076 451px,#ff006e 471px)"></i><i style="top:288px;left:64px;width:469px;background:linear-gradient(90deg,#005fff 0,#023aff 108px,#af0cff 230px,#e600ff 266px,#ff00fd 283px,#ff00cb 322px,#ff009f 375px,#ff0077 451px,#ff0070 469px)"></i><i style="top:290px;left:65px;width:466px;background:linear-gradient(90deg,#005eff 0,#0239ff 107px,#af0bff 230px,#e200ff 264px,#ff00fd 284px,#ff00cb 323px,#ff009e 377px,#ff0077 454px,#ff0072 466px)"></i><i style="top:292px;left:66px;width:463px;background:linear-gradient(90deg,#005cff 0,#0138ff 106px,#ae09ff 230px,#de00ff 262px,#ff00fe 284px,#ff00cc 323px,#ff009f 377px,#ff0077 454px,#ff0074 463px)"></i><i style="top:294px;left:67px;width:461px;background:linear-gradient(90deg,#005aff 0,#0237ff 106px,#b008ff 231px,#db00ff 260px,#ff00fd 285px,#ff00cb 325px,#ff009e 380px,#ff0077 458px,#ff0075 461px)"></i><i style="top:296px;left:68px;width:458px;background:linear-gradient(90deg,#0059ff 0,#0236ff 105px,#af07ff 231px,#d700ff 258px,#ff00fd 286px,#ff00cb 326px,#ff009f 381px,#ff0077 458px)"></i><i style="top:298px;left:69px;width:456px;background:linear-gradient(90deg,#0057ff 0,#0235ff 104px,#af06ff 231px,#d500ff 257px,#ff00fe 286px,#ff00cc 326px,#ff00a0 381px,#ff0079 456px)"></i><i style="top:300px;left:70px;width:453px;background:linear-gradient(90deg,#0056ff 0,#0134ff 103px,#ae05ff 231px,#d300ff 256px,#ff00fd 287px,#ff00cb 328px,#ff009e 384px,#ff007b 453px)"></i><i style="top:302px;left:71px;width:450px;background:linear-gradient(90deg,#0054ff 0,#0232ff 103px,#b003ff 232px,#e800ff 271px,#ff00fd 288px,#ff00cb 329px,#ff009f 385px,#ff007d 450px)"></i><i style="top:304px;left:72px;width:448px;background:linear-gradient(90deg,#0053ff 0,#0231ff 102px,#af02ff 232px,#ff00fe 288px,#ff00cc 329px,#ff00a0 385px,#ff007f 448px)"></i><i style="top:306px;left:73px;width:445px;background:linear-gradient(90deg,#0051ff 0,#0230ff 101px,#af01ff 232px,#ff00fd 289px,#ff00cc 330px,#ff009f 387px,#ff0081 445px)"></i><i style="top:308px;left:73px;width:444px;background:linear-gradient(90deg,#0050ff 0,#022fff 102px,#b000ff 234px,#ff00fd 291px,#ff00cb 333px,#ff009e 391px,#ff0082 444px)"></i><i style="top:310px;left:74px;width:441px;background:linear-gradient(90deg,#004fff 0,#022eff 101px,#b000ff 234px,#ff00fe 291px,#ff00cc 333px,#ff009f 391px,#ff0085 441px)"></i><i style="top:312px;left:75px;width:438px;background:linear-gradient(90deg,#004dff 0,#022dff 100px,#af00ff 234px,#ff00fd 292px,#ff00cc 334px,#ff009f 392px,#ff0087 438px)"></i><i style="top:314px;left:76px;width:436px;background:linear-gradient(90deg,#004cff 0,#012cff 99px,#ad00ff 233px,#ff00fd 293px,#ff00cb 336px,#ff009e 395px,#ff0088 436px)"></i><i style="top:316px;left:77px;width:433px;background:linear-gradient(90deg,#004aff 0,#022bff 99px,#a900ff 230px,#ff00fe 293px,#ff00cc 336px,#ff009f 395px,#ff008b 433px)"></i><i style="top:318px;left:78px;width:431px;background:linear-gradient(90deg,#0049ff 0,#022aff 98px,#a600ff 228px,#ff00fd 294px,#ff00cc 337px,#ff009f 396px,#ff008c 431px)"></i><i style="top:320px;left:79px;width:428px;background:linear-gradient(90deg,#0048ff 0,#0229ff 97px,#a200ff 225px,#ff00fd 295px,#ff00cb 339px,#ff009e 399px,#ff008f 428px)"></i><i style="top:322px;left:80px;width:425px;background:linear-gradient(90deg,#0046ff 0,#0228ff 97px,#9f00ff 223px,#ff00fe 295px,#ff00cc 339px,#ff009f 399px,#ff0091 425px)"></i><i style="top:324px;left:81px;width:423px;background:linear-gradient(90deg,#0045ff 0,#0227ff 96px,#9b00ff 220px,#ff00fd 296px,#ff00cc 340px,#ff009f 401px,#ff0093 423px)"></i><i style="top:326px;left:82px;width:420px;background:linear-gradient(90deg,#0044ff 0,#0227ff 95px,#9700ff 217px,#ff00fd 297px,#ff00cb 342px,#ff009e 404px,#ff0095 420px)"></i><i style="top:328px;left:83px;width:418px;background:linear-gradient(90deg,#0043ff 0,#0226ff 94px,#9400ff 215px,#ff00fe 297px,#ff00cc 342px,#ff009f 404px,#ff0097 418px)"></i><i style="top:330px;left:84px;width:415px;background:linear-gradient(90deg,#0041ff 0,#0225ff 94px,#9000ff 212px,#ff00fd 298px,#ff00cc 343px,#ff009f 405px,#ff0099 415px)"></i><i style="top:332px;left:85px;width:412px;background:linear-gradient(90deg,#0040ff 0,#0224ff 93px,#8e00ff 210px,#ff00fd 299px,#ff00cb 345px,#ff009e 408px,#ff009c 412px)"></i><i style="top:334px;left:86px;width:410px;background:linear-gradient(90deg,#003fff 0,#0223ff 92px,#8a00ff 207px,#ff00fe 299px,#ff00cc 345px,#ff009f 408px,#ff009e 410px)"></i><i style="top:336px;left:87px;width:407px;background:linear-gradient(90deg,#003eff 0,#0322ff 92px,#8700ff 205px,#ff00fd 300px,#ff00cc 346px,#ff00a0 407px)"></i><i style="top:338px;left:88px;width:405px;background:linear-gradient(90deg,#003cff 0,#0221ff 91px,#8400ff 202px,#ff00fd 301px,#ff00cb 348px,#ff00a2 405px)"></i><i style="top:340px;left:89px;width:402px;background:linear-gradient(90deg,#003bff 0,#0221ff 90px,#8100ff 200px,#ff00fe 301px,#ff00cc 348px,#ff00a5 402px)"></i><i style="top:342px;left:90px;width:399px;background:linear-gradient(90deg,#003aff 0,#0220ff 89px,#7e00ff 197px,#ff00fd 302px,#ff00cc 349px,#ff00a7 399px)"></i><i style="top:344px;left:91px;width:397px;background:linear-gradient(90deg,#0039ff 0,#021fff 89px,#7b00ff 195px,#ff00fd 303px,#ff00cc 350px,#ff00a9 397px)"></i><i style="top:346px;left:92px;width:394px;background:linear-gradient(90deg,#0038ff 0,#021eff 88px,#7800ff 192px,#ff00fe 303px,#ff00cc 351px,#ff00ac 394px)"></i><i style="top:348px;left:93px;width:392px;background:linear-gradient(90deg,#0037ff 0,#021dff 87px,#7600ff 190px,#ff00fd 304px,#ff00cc 352px,#ff00ae 392px)"></i><i style="top:350px;left:94px;width:389px;background:linear-gradient(90deg,#0036ff 0,#031cff 87px,#7200ff 187px,#ff00fd 305px,#ff00cc 353px,#ff00b1 389px)"></i><i style="top:352px;left:95px;width:386px;background:linear-gradient(90deg,#0035ff 0,#021cff 86px,#6f00ff 184px,#ff00fe 305px,#ff00cc 353px,#ff00b4 386px)"></i><i style="top:354px;left:96px;width:384px;background:linear-gradient(90deg,#0033ff 0,#021bff 85px,#6d00ff 182px,#ff00fd 306px,#ff00cc 355px,#ff00b6 384px)"></i><i style="top:356px;left:97px;width:381px;background:linear-gradient(90deg,#0032ff 0,#021aff 84px,#6900ff 179px,#ff00fd 307px,#ff00cc 356px,#ff00b9 381px)"></i><i style="top:358px;left:98px;width:379px;background:linear-gradient(90deg,#0031ff 0,#0219ff 84px,#6700ff 177px,#ff00fe 307px,#ff00cc 356px,#ff00bb 379px)"></i><i style="top:360px;left:99px;width:376px;background:linear-gradient(90deg,#0030ff 0,#0219ff 83px,#6400ff 174px,#ff00fd 308px,#ff00cc 358px,#ff00be 376px)"></i><i style="top:362px;left:100px;width:373px;background:linear-gradient(90deg,#002fff 0,#0218ff 82px,#6200ff 172px,#ff00fd 309px,#ff00cb 359px,#ff00c1 373px)"></i><i style="top:364px;left:101px;width:371px;background:linear-gradient(90deg,#002eff 0,#0317ff 82px,#5f00ff 169px,#ff00fe 309px,#ff00cc 359px,#ff00c3 371px)"></i><i style="top:366px;left:102px;width:368px;background:linear-gradient(90deg,#002dff 0,#0217ff 81px,#5d00ff 167px,#ff00fd 310px,#ff00cb 361px,#ff00c6 368px)"></i><i style="top:368px;left:103px;width:366px;background:linear-gradient(90deg,#002cff 0,#0216ff 80px,#5a00ff 164px,#ff00fd 311px,#ff00cb 362px,#ff00c8 366px)"></i><i style="top:370px;left:104px;width:363px;background:linear-gradient(90deg,#002bff 0,#0215ff 79px,#5800ff 162px,#ff00fe 311px,#ff00cc 362px,#ff00cb 363px)"></i><i style="top:372px;left:105px;width:360px;background:linear-gradient(90deg,#002aff 0,#0215ff 79px,#5500ff 159px,#ff00fd 312px,#ff00cf 360px)"></i><i style="top:374px;left:106px;width:358px;background:linear-gradient(90deg,#0029ff 0,#0214ff 78px,#5300ff 157px,#ff00fd 313px,#ff00d1 358px)"></i><i style="top:376px;left:107px;width:355px;background:linear-gradient(90deg,#0028ff 0,#0213ff 77px,#5000ff 154px,#ff00fe 313px,#ff00d4 355px)"></i><i style="top:378px;left:108px;width:353px;background:linear-gradient(90deg,#0027ff 0,#0312ff 77px,#4f00ff 152px,#fd00ff 311px,#ff00d7 353px)"></i><i style="top:380px;left:109px;width:350px;background:linear-gradient(90deg,#0026ff 0,#0212ff 76px,#4c00ff 149px,#fb00ff 310px,#ff00f6 321px,#ff00da 350px)"></i><i style="top:382px;left:110px;width:347px;background:linear-gradient(90deg,#0026ff 0,#0211ff 75px,#4a00ff 147px,#ff00fe 315px,#ff00dd 347px)"></i><i style="top:384px;left:111px;width:345px;background:linear-gradient(90deg,#0025ff 0,#0211ff 74px,#4700ff 144px,#f700ff 307px,#ff00fc 317px,#ff00e0 345px)"></i><i style="top:386px;left:112px;width:342px;background:linear-gradient(90deg,#0024ff 0,#0210ff 74px,#4600ff 142px,#ff00fd 317px,#ff00e3 342px)"></i><i style="top:388px;left:113px;width:340px;background:linear-gradient(90deg,#0023ff 0,#020fff 73px,#4300ff 139px,#f200ff 304px,#ff00fc 318px,#ff00e6 340px)"></i><i style="top:390px;left:114px;width:337px;background:linear-gradient(90deg,#0022ff 0,#020fff 72px,#4100ff 137px,#f000ff 303px,#ff00fc 319px,#ff00ea 337px)"></i><i style="top:392px;left:115px;width:334px;background:linear-gradient(90deg,#0021ff 0,#020eff 71px,#3f00ff 134px,#ed00ff 301px,#ff00fd 319px,#ff00ed 334px)"></i><i style="top:394px;left:116px;width:332px;background:linear-gradient(90deg,#0020ff 0,#020eff 71px,#3d00ff 132px,#eb00ff 300px,#ff00fc 320px,#ff00f0 332px)"></i><i style="top:396px;left:117px;width:329px;background:linear-gradient(90deg,#001fff 0,#020dff 70px,#3b00ff 130px,#ea00ff 299px,#ff00fc 321px,#ff00f4 329px)"></i><i style="top:398px;left:118px;width:327px;background:linear-gradient(90deg,#001eff 0,#020dff 69px,#3900ff 127px,#e800ff 298px,#ff00fd 321px,#ff00f6 327px)"></i><i style="top:400px;left:119px;width:324px;background:linear-gradient(90deg,#001eff 0,#020cff 69px,#3700ff 125px,#e600ff 297px,#ff00fc 322px,#ff00fa 324px)"></i><i style="top:402px;left:121px;width:320px;background:linear-gradient(90deg,#001dff 0,#020bff 67px,#3500ff 121px,#e400ff 294px,#ff00fe 320px)"></i><i style="top:404px;left:122px;width:318px;background:linear-gradient(90deg,#001cff 0,#020bff 66px,#3300ff 119px,#e200ff 293px,#fd00ff 318px)"></i><i style="top:406px;left:123px;width:315px;background:linear-gradient(90deg,#001bff 0,#020aff 65px,#3200ff 117px,#e000ff 292px,#f900ff 315px)"></i><i style="top:408px;left:124px;width:313px;background:linear-gradient(90deg,#001aff 0,#020aff 65px,#3000ff 115px,#df00ff 291px,#f600ff 313px)"></i><i style="top:410px;left:125px;width:310px;background:linear-gradient(90deg,#0019ff 0,#0209ff 64px,#2e00ff 112px,#dc00ff 289px,#f200ff 310px)"></i><i style="top:412px;left:126px;width:307px;background:linear-gradient(90deg,#0019ff 0,#0209ff 63px,#2d00ff 110px,#db00ff 288px,#ef00ff 307px)"></i><i style="top:414px;left:127px;width:305px;background:linear-gradient(90deg,#0018ff 0,#0308ff 63px,#2b00ff 108px,#d900ff 287px,#ec00ff 305px)"></i><i style="top:416px;left:128px;width:302px;background:linear-gradient(90deg,#0017ff 0,#0207ff 62px,#2a00ff 106px,#d800ff 286px,#e800ff 302px)"></i><i style="top:418px;left:129px;width:300px;background:linear-gradient(90deg,#0016ff 0,#0207ff 61px,#2900ff 104px,#d700ff 286px,#e600ff 300px)"></i><i style="top:420px;left:131px;width:296px;background:linear-gradient(90deg,#0015ff 0,#0207ff 59px,#2600ff 100px,#d500ff 283px,#e200ff 296px)"></i><i style="top:422px;left:132px;width:293px;background:linear-gradient(90deg,#0014ff 0,#0206ff 59px,#2700ff 100px,#d500ff 284px,#de00ff 293px)"></i><i style="top:424px;left:133px;width:291px;background:linear-gradient(90deg,#0014ff 0,#0205ff 58px,#2500ff 98px,#d400ff 283px,#dc00ff 291px)"></i><i style="top:426px;left:134px;width:288px;background:linear-gradient(90deg,#0013ff 0,#0205ff 57px,#2500ff 97px,#d300ff 283px,#d800ff 288px)"></i><i style="top:428px;left:135px;width:285px;background:linear-gradient(90deg,#0012ff 0,#0304ff 57px,#2700ff 99px,#d500ff 285px)"></i><i style="top:430px;left:136px;width:283px;background:linear-gradient(90deg,#0011ff 0,#0204ff 56px,#2800ff 99px,#d300ff 283px)"></i><i style="top:432px;left:137px;width:280px;background:linear-gradient(90deg,#0011ff 0,#0204ff 55px,#2e00ff 106px,#cf00ff 280px)"></i><i style="top:434px;left:139px;width:277px;background:linear-gradient(90deg,#0010ff 0,#0303ff 54px,#5400ff 147px,#cd00ff 277px)"></i><i style="top:436px;left:140px;width:274px;background:linear-gradient(90deg,#000fff 0,#0202ff 53px,#b000ff 247px,#ca00ff 274px)"></i><i style="top:438px;left:141px;width:271px;background:linear-gradient(90deg,#000eff 0,#0202ff 52px,#b000ff 247px,#c600ff 271px)"></i><i style="top:440px;left:142px;width:269px;background:linear-gradient(90deg,#000eff 0,#0202ff 51px,#af00ff 247px,#c400ff 269px)"></i><i style="top:442px;left:143px;width:266px;background:linear-gradient(90deg,#000dff 0,#0301ff 51px,#b000ff 248px,#c100ff 266px)"></i><i style="top:444px;left:145px;width:263px;background:linear-gradient(90deg,#000cff 0,#0201ff 49px,#b000ff 247px,#bf00ff 263px)"></i><i style="top:446px;left:146px;width:260px;background:linear-gradient(90deg,#000bff 0,#0200ff 48px,#b000ff 247px,#bc00ff 260px)"></i><i style="top:448px;left:147px;width:257px;background:linear-gradient(90deg,#000bff 0,#0300ff 48px,#b000ff 248px,#b900ff 257px)"></i><i style="top:450px;left:148px;width:255px;background:linear-gradient(90deg,#000aff 0,#0200ff 47px,#b000ff 248px,#b600ff 255px)"></i><i style="top:452px;left:150px;width:251px;background:linear-gradient(90deg,#0009ff 0,#0200ff 45px,#b000ff 247px,#b300ff 251px)"></i><i style="top:454px;left:151px;width:249px;background:linear-gradient(90deg,#0009ff 0,#0200ff 44px,#b000ff 247px,#b100ff 249px)"></i><i style="top:456px;left:152px;width:246px;background:linear-gradient(90deg,#0008ff 0,#0300ff 44px,#ae00ff 246px)"></i><i style="top:458px;left:153px;width:243px;background:linear-gradient(90deg,#0007ff 0,#0200ff 43px,#ac00ff 243px)"></i><i style="top:460px;left:155px;width:240px;background:linear-gradient(90deg,#0007ff 0,#0200ff 41px,#aa00ff 240px)"></i><i style="top:462px;left:156px;width:237px;background:linear-gradient(90deg,#0006ff 0,#0300ff 41px,#a700ff 237px)"></i><i style="top:464px;left:157px;width:235px;background:linear-gradient(90deg,#0005ff 0,#0200ff 40px,#a500ff 235px)"></i><i style="top:466px;left:158px;width:232px;background:linear-gradient(90deg,#0005ff 0,#0200ff 39px,#a200ff 232px)"></i><i style="top:468px;left:160px;width:228px;background:linear-gradient(90deg,#0004ff 0,#0200ff 37px,#9f00ff 228px)"></i><i style="top:470px;left:161px;width:226px;background:linear-gradient(90deg,#0003ff 0,#0300ff 37px,#9d00ff 226px)"></i><i style="top:472px;left:162px;width:223px;background:linear-gradient(90deg,#0003ff 0,#0200ff 36px,#9b00ff 223px)"></i><i style="top:474px;left:164px;width:220px;background:linear-gradient(90deg,#0002ff 0,#0200ff 34px,#9900ff 220px)"></i><i style="top:476px;left:165px;width:217px;background:linear-gradient(90deg,#0001ff 0,#0300ff 34px,#9600ff 217px)"></i><i style="top:478px;left:166px;width:214px;background:linear-gradient(90deg,#0001ff 0,#0300ff 33px,#9400ff 214px)"></i><i style="top:480px;left:168px;width:211px;background:linear-gradient(90deg,#0000ff 0,#0200ff 31px,#9200ff 211px)"></i><i style="top:482px;left:169px;width:208px;background:linear-gradient(90deg,#0000ff 0,#0300ff 31px,#8f00ff 208px)"></i><i style="top:484px;left:170px;width:206px;background:linear-gradient(90deg,#0000ff 0,#0300ff 30px,#8e00ff 206px)"></i><i style="top:486px;left:172px;width:202px;background:linear-gradient(90deg,#0000ff 0,#0200ff 28px,#8b00ff 202px)"></i><i style="top:488px;left:173px;width:199px;background:linear-gradient(90deg,#0000ff 0,#0200ff 27px,#8900ff 199px)"></i><i style="top:490px;left:175px;width:196px;background:linear-gradient(90deg,#0000ff 0,#0300ff 26px,#8700ff 196px)"></i><i style="top:492px;left:176px;width:193px;background:linear-gradient(90deg,#0000ff 0,#0300ff 25px,#8400ff 193px)"></i><i style="top:494px;left:177px;width:191px;background:linear-gradient(90deg,#0000ff 0,#0300ff 25px,#8300ff 191px)"></i><i style="top:496px;left:179px;width:187px;background:linear-gradient(90deg,#0000ff 0,#0300ff 23px,#8000ff 187px)"></i><i style="top:498px;left:180px;width:184px;background:linear-gradient(90deg,#0000ff 0,#0300ff 22px,#7e00ff 184px)"></i><i style="top:500px;left:182px;width:181px;background:linear-gradient(90deg,#0000ff 0,#0300ff 21px,#7c00ff 181px)"></i><i style="top:502px;left:183px;width:178px;background:linear-gradient(90deg,#0000ff 0,#0300ff 20px,#7a00ff 178px)"></i><i style="top:504px;left:185px;width:175px;background:linear-gradient(90deg,#0000ff 0,#0300ff 18px,#7900ff 175px)"></i><i style="top:506px;left:186px;width:172px;background:linear-gradient(90deg,#0000ff 0,#0300ff 18px,#7600ff 172px)"></i><i style="top:508px;left:188px;width:168px;background:linear-gradient(90deg,#0000ff 0,#0400ff 17px,#7400ff 168px)"></i><i style="top:510px;left:189px;width:166px;background:linear-gradient(90deg,#0000ff 0,#0400ff 16px,#7300ff 166px)"></i><i style="top:512px;left:191px;width:162px;background:linear-gradient(90deg,#0000ff 0,#0400ff 15px,#7000ff 162px)"></i><i style="top:514px;left:193px;width:159px;background:linear-gradient(90deg,#0000ff 0,#0500ff 15px,#6f00ff 159px)"></i><i style="top:516px;left:194px;width:156px;background:linear-gradient(90deg,#0000ff 0,#0500ff 14px,#6d00ff 156px)"></i><i style="top:518px;left:196px;width:152px;background:linear-gradient(90deg,#0000ff 0,#0800ff 17px,#6a00ff 152px)"></i><i style="top:520px;left:197px;width:150px;background:linear-gradient(90deg,#0000ff 0,#1100ff 28px,#6900ff 150px)"></i><i style="top:522px;left:199px;width:146px;background:linear-gradient(90deg,#0000ff 0,#6700ff 146px)"></i><i style="top:524px;left:201px;width:143px;background:linear-gradient(90deg,#0000ff 0,#6600ff 143px)"></i><i style="top:526px;left:203px;width:139px;background:linear-gradient(90deg,#0100ff 0,#6300ff 139px)"></i><i style="top:528px;left:204px;width:136px;background:linear-gradient(90deg,#0100ff 0,#6100ff 136px)"></i><i style="top:530px;left:206px;width:133px;background:linear-gradient(90deg,#0200ff 0,#6000ff 133px)"></i><i style="top:532px;left:208px;width:129px;background:linear-gradient(90deg,#0300ff 0,#5e00ff 129px)"></i><i style="top:534px;left:210px;width:126px;background:linear-gradient(90deg,#0500ff 0,#5d00ff 126px)"></i><i style="top:536px;left:212px;width:122px;background:linear-gradient(90deg,#0600ff 0,#5b00ff 122px)"></i><i style="top:538px;left:213px;width:119px;background:linear-gradient(90deg,#0600ff 0,#5900ff 119px)"></i><i style="top:540px;left:215px;width:116px;background:linear-gradient(90deg,#0700ff 0,#5700ff 116px)"></i><i style="top:542px;left:217px;width:112px;background:linear-gradient(90deg,#0900ff 0,#5600ff 112px)"></i><i style="top:544px;left:219px;width:109px;background:linear-gradient(90deg,#0a00ff 0,#5400ff 109px)"></i><i style="top:546px;left:221px;width:105px;background:linear-gradient(90deg,#0b00ff 0,#5200ff 105px)"></i><i style="top:548px;left:223px;width:101px;background:linear-gradient(90deg,#0c00ff 0,#5000ff 101px)"></i><i style="top:550px;left:225px;width:98px;background:linear-gradient(90deg,#0d00ff 0,#4f00ff 98px)"></i><i style="top:552px;left:227px;width:94px;background:linear-gradient(90deg,#0e00ff 0,#4d00ff 94px)"></i><i style="top:554px;left:229px;width:91px;background:linear-gradient(90deg,#0f00ff 0,#4c00ff 91px)"></i><i style="top:556px;left:231px;width:87px;background:linear-gradient(90deg,#1000ff 0,#4a00ff 87px)"></i><i style="top:558px;left:233px;width:83px;background:linear-gradient(90deg,#1100ff 0,#4900ff 83px)"></i><i style="top:560px;left:235px;width:80px;background:linear-gradient(90deg,#1200ff 0,#4700ff 80px)"></i><i style="top:562px;left:237px;width:76px;background:linear-gradient(90deg,#1300ff 0,#4600ff 76px)"></i><i style="top:564px;left:239px;width:73px;background:linear-gradient(90deg,#1400ff 0,#4400ff 73px)"></i><i style="top:566px;left:241px;width:69px;background:linear-gradient(90deg,#1500ff 0,#4300ff 69px)"></i><i style="top:568px;left:243px;width:65px;background:linear-gradient(90deg,#1700ff 0,#4100ff 65px)"></i><i style="top:570px;left:245px;width:62px;background:linear-gradient(90deg,#1800ff 0,#4000ff 62px)"></i><i style="top:572px;left:247px;width:58px;background:linear-gradient(90deg,#1900ff 0,#3e00ff 58px)"></i><i style="top:574px;left:249px;width:55px;background:linear-gradient(90deg,#1a00ff 0,#3d00ff 55px)"></i><i style="top:576px;left:251px;width:51px;background:linear-gradient(90deg,#1b00ff 0,#3b00ff 51px)"></i><i style="top:578px;left:253px;width:47px;background:linear-gradient(90deg,#1c00ff 0,#3a00ff 47px)"></i><i style="top:580px;left:255px;width:44px;background:linear-gradient(90deg,#1d00ff 0,#3900ff 44px)"></i><i style="top:582px;left:257px;width:40px;background:linear-gradient(90deg,#1e00ff 0,#3700ff 40px)"></i><i style="top:584px;left:259px;width:37px;background:linear-gradient(90deg,#1f00ff 0,#3600ff 37px)"></i><i style="top:586px;left:260px;width:34px;background:linear-gradient(90deg,#1f00ff 0,#3400ff 34px)"></i><i style="top:588px;left:262px;width:30px;background:linear-gradient(90deg,#2000ff 0,#3300ff 30px)"></i><i style="top:590px;left:265px;width:26px;background:linear-gradient(90deg,#2100ff 0,#3200ff 26px)"></i><i style="top:592px;left:267px;width:22px;background:linear-gradient(90deg,#2200ff 0,#3000ff 22px)"></i><i style="top:594px;left:269px;width:18px;background:linear-gradient(90deg,#2300ff 0,#2f00ff 18px)"></i><i style="top:596px;left:271px;width:15px;background:linear-gradient(90deg,#2400ff 0,#2e00ff 15px)"></i><i style="top:598px;left:273px;width:11px;background:linear-gradient(90deg,#2500ff 0,#2c00ff 11px)"></i>
<div style="left:0;top:0;width:658px;height:613px;background:rgba(0,0,0,.4);clip-path:path(evenodd,'M0 0H658V613H0Z M493.92 77.05 136.62 36.5 191.91 450.81Z')"></div>
</div></div>
<div style="left:1243px;top:757.45px;width:6px;height:1.5px;background:#ddd"></div>
<span class="t" style="left:1234.69px;top:752px;font:18px/18px Liberation Sans,sans-serif;color:#ddd;transform:scaleX(0.83);">0</span>
<div style="left:1248.75px;top:759px;width:1.5px;height:6px;background:#ddd"></div>
<span class="t" style="left:1245.35px;top:770px;font:18px/18px Liberation Sans,sans-serif;color:#ddd;transform:scaleX(0.83);">0</span>
<div style="left:1243px;top:706.35px;width:6px;height:1.5px;background:#ddd"></div>
<span class="t" style="left:1212.35px;top:699px;font:18px/18px Liberation Sans,sans-serif;color:#ddd;transform:scaleX(0.88);">0.05</span>
<div style="left:1303.6px;top:759px;width:1.5px;height:6px;background:#ddd"></div>
<span class="t" style="left:1289.02px;top:770px;font:18px/18px Liberation Sans,sans-serif;color:#ddd;transform:scaleX(0.88);">0.05</span>
<div style="left:1243px;top:655.25px;width:6px;height:1.5px;background:#ddd"></div>
<span class="t" style="left:1221.11px;top:648px;font:18px/18px Liberation Sans,sans-serif;color:#ddd;transform:scaleX(0.88);">0.1</span>
<div style="left:1358.45px;top:759px;width:1.5px;height:6px;background:#ddd"></div>
<span class="t" style="left:1348.25px;top:770px;font:18px/18px Liberation Sans,sans-serif;color:#ddd;transform:scaleX(0.88);">0.1</span>
<div style="left:1243px;top:604.15px;width:6px;height:1.5px;background:#ddd"></div>
<span class="t" style="left:1212.35px;top:597px;font:18px/18px Liberation Sans,sans-serif;color:#ddd;transform:scaleX(0.88);">0.15</span>
<div style="left:1413.3px;top:759px;width:1.5px;height:6px;background:#ddd"></div>
<span class="t" style="left:1398.72px;top:770px;font:18px/18px Liberation Sans,sans-serif;color:#ddd;transform:scaleX(0.88);">0.15</span>
<div style="left:1243px;top:553.05px;width:6px;height:1.5px;background:#ddd"></div>
<span class="t" style="left:1221.11px;top:546px;font:18px/18px Liberation Sans,sans-serif;color:#ddd;transform:scaleX(0.88);">0.2</span>
<div style="left:1468.15px;top:759px;width:1.5px;height:6px;background:#ddd"></div>
<span class="t" style="left:1457.95px;top:770px;font:18px/18px Liberation Sans,sans-serif;color:#ddd;transform:scaleX(0.88);">0.2</span>
<div style="left:1243px;top:501.95px;width:6px;height:1.5px;background:#ddd"></div>
<span class="t" style="left:1212.35px;top:495px;font:18px/18px Liberation Sans,sans-serif;color:#ddd;transform:scaleX(0.88);">0.25</span>
<div style="left:1523px;top:759px;width:1.5px;height:6px;background:#ddd"></div>
<span class="t" style="left:1508.42px;top:770px;font:18px/18px Liberation Sans,sans-serif;color:#ddd;transform:scaleX(0.88);">0.25</span>
<div style="left:1243px;top:450.85px;width:6px;height:1.5px;background:#ddd"></div>
<span class="t" style="left:1221.11px;top:444px;font:18px/18px Liberation Sans,sans-serif;color:#ddd;transform:scaleX(0.88);">0.3</span>
<div style="left:1577.85px;top:759px;width:1.5px;height:6px;background:#ddd"></div>
<span class="t" style="left:1567.65px;top:770px;font:18px/18px Liberation Sans,sans-serif;color:#ddd;transform:scaleX(0.88);">0.3</span>
<div style="left:1243px;top:399.75px;width:6px;height:1.5px;background:#ddd"></div>
<span class="t" style="left:1212.35px;top:392px;font:18px/18px Liberation Sans,sans-serif;color:#ddd;transform:scaleX(0.88);">0.35</span>
<div style="left:1632.7px;top:759px;width:1.5px;height:6px;background:#ddd"></div>
<span class="t" style="left:1618.12px;top:770px;font:18px/18px Liberation Sans,sans-serif;color:#ddd;transform:scaleX(0.88);">0.35</span>
<div style="left:1243px;top:348.65px;width:6px;height:1.5px;background:#ddd"></div>
<span class="t" style="left:1221.11px;top:341px;font:18px/18px Liberation Sans,sans-serif;color:#ddd;transform:scaleX(0.88);">0.4</span>
<div style="left:1687.55px;top:759px;width:1.5px;height:6px;background:#ddd"></div>
<span class="t" style="left:1677.35px;top:770px;font:18px/18px Liberation Sans,sans-serif;color:#ddd;transform:scaleX(0.88);">0.4</span>
<div style="left:1243px;top:297.55px;width:6px;height:1.5px;background:#ddd"></div>
<span class="t" style="left:1212.35px;top:290px;font:18px/18px Liberation Sans,sans-serif;color:#ddd;transform:scaleX(0.88);">0.45</span>
<div style="left:1742.4px;top:759px;width:1.5px;height:6px;background:#ddd"></div>
<span class="t" style="left:1727.82px;top:770px;font:18px/18px Liberation Sans,sans-serif;color:#ddd;transform:scaleX(0.88);">0.45</span>
<div style="left:1243px;top:246.45px;width:6px;height:1.5px;background:#ddd"></div>
<span class="t" style="left:1221.11px;top:239px;font:18px/18px Liberation Sans,sans-serif;color:#ddd;transform:scaleX(0.88);">0.5</span>
<div style="left:1797.25px;top:759px;width:1.5px;height:6px;background:#ddd"></div>
<span class="t" style="left:1787.05px;top:770px;font:18px/18px Liberation Sans,sans-serif;color:#ddd;transform:scaleX(0.88);">0.5</span>
<div style="left:1243px;top:195.35px;width:6px;height:1.5px;background:#ddd"></div>
<span class="t" style="left:1212.35px;top:188px;font:18px/18px Liberation Sans,sans-serif;color:#ddd;transform:scaleX(0.88);">0.55</span>
<div style="left:1852.1px;top:759px;width:1.5px;height:6px;background:#ddd"></div>
<span class="t" style="left:1837.52px;top:770px;font:18px/18px Liberation Sans,sans-serif;color:#ddd;transform:scaleX(0.88);">0.55</span>
<svg style="left:1249px;top:144px" width="660" height="616" viewBox="1249 144 660 616"><rect x="1508.5" y="258.5" width="14.5" height="17.5" fill="none" stroke="#fff" stroke-width="1.5"/><rect x="1563.62" y="246.87" width="14.5" height="17.5" fill="none" stroke="#fff" stroke-width="1.5"/><rect x="1614.24" y="238.25" width="14.5" height="17.5" fill="none" stroke="#fff" stroke-width="1.5"/><rect x="1670.12" y="226.62" width="14.5" height="17.5" fill="none" stroke="#fff" stroke-width="1.5"/><rect x="1736.12" y="212.37" width="14.5" height="17.5" fill="none" stroke="#fff" stroke-width="1.5"/><rect x="1378" y="171.87" width="14.5" height="17.5" fill="none" stroke="#fff" stroke-width="1.5"/><rect x="1391.12" y="187.62" width="14.5" height="17.5" fill="none" stroke="#fff" stroke-width="1.5"/><rect x="1403.5" y="202.62" width="14.5" height="17.5" fill="none" stroke="#fff" stroke-width="1.5"/><rect x="1418.87" y="221.37" width="14.5" height="17.5" fill="none" stroke="#fff" stroke-width="1.5"/><rect x="1436.87" y="241.62" width="14.5" height="17.5" fill="none" stroke="#fff" stroke-width="1.5"/><rect x="1465" y="182" width="14.5" height="17.5" fill="none" stroke="#fff" stroke-width="1.5"/><rect x="1463.87" y="197.37" width="14.5" height="17.5" fill="none" stroke="#fff" stroke-width="1.5"/><rect x="1463.5" y="212" width="14.5" height="17.5" fill="none" stroke="#fff" stroke-width="1.5"/><rect x="1462.37" y="227.75" width="14.5" height="17.5" fill="none" stroke="#fff" stroke-width="1.5"/><rect x="1460.87" y="246.5" width="14.5" height="17.5" fill="none" stroke="#fff" stroke-width="1.5"/><rect x="1393.37" y="283.62" width="14.5" height="17.5" fill="none" stroke="#fff" stroke-width="1.5"/><rect x="1406.5" y="279.87" width="14.5" height="17.5" fill="none" stroke="#fff" stroke-width="1.5"/><rect x="1419.25" y="278.75" width="14.5" height="17.5" fill="none" stroke="#fff" stroke-width="1.5"/><rect x="1433.12" y="275.37" width="14.5" height="17.5" fill="none" stroke="#fff" stroke-width="1.5"/><rect x="1446.25" y="273.87" width="14.5" height="17.5" fill="none" stroke="#fff" stroke-width="1.5"/><rect x="1455.62" y="306.5" width="14.5" height="17.5" fill="none" stroke="#fff" stroke-width="1.5"/><rect x="1452.62" y="352.62" width="14.5" height="17.5" fill="none" stroke="#fff" stroke-width="1.5"/><rect x="1448.87" y="408.5" width="14.5" height="17.5" fill="none" stroke="#fff" stroke-width="1.5"/><rect x="1442.87" y="479.37" width="14.5" height="17.5" fill="none" stroke="#fff" stroke-width="1.5"/><rect x="1434.62" y="586.62" width="14.5" height="17.5" fill="none" stroke="#fff" stroke-width="1.5"/><rect x="1476.62" y="288.87" width="14.5" height="17.5" fill="none" stroke="#fff" stroke-width="1.5"/><rect x="1496.12" y="312.87" width="14.5" height="17.5" fill="none" stroke="#fff" stroke-width="1.5"/><rect x="1515.62" y="339.12" width="14.5" height="17.5" fill="none" stroke="#fff" stroke-width="1.5"/><rect x="1542.62" y="370.62" width="14.5" height="17.5" fill="none" stroke="#fff" stroke-width="1.5"/><rect x="1576" y="410" width="14.5" height="17.5" fill="none" stroke="#fff" stroke-width="1.5"/><ellipse cx="1380" cy="176.12" rx="4.7" ry="5.7" fill="rgb(30,165,30)" stroke="#000" stroke-width="1.3"/><ellipse cx="1392.75" cy="189.25" rx="4.7" ry="5.7" fill="rgb(53,166,53)" stroke="#000" stroke-width="1.3"/><ellipse cx="1406.62" cy="206.12" rx="4.7" ry="5.7" fill="rgb(77,167,77)" stroke="#000" stroke-width="1.3"/><ellipse cx="1423.87" cy="224.5" rx="4.7" ry="5.7" fill="rgb(103,168,103)" stroke="#000" stroke-width="1.3"/><ellipse cx="1441.87" cy="249.25" rx="4.7" ry="5.7" fill="rgb(132,170,132)" stroke="#000" stroke-width="1.3"/><ellipse cx="1470" cy="188.5" rx="4.7" ry="5.7" fill="rgb(200,195,0)" stroke="#000" stroke-width="1.3"/><ellipse cx="1468.5" cy="202.75" rx="4.7" ry="5.7" fill="rgb(195,191,28)" stroke="#000" stroke-width="1.3"/><ellipse cx="1468.5" cy="217" rx="4.7" ry="5.7" fill="rgb(190,187,57)" stroke="#000" stroke-width="1.3"/><ellipse cx="1467" cy="233.87" rx="4.7" ry="5.7" fill="rgb(185,183,89)" stroke="#000" stroke-width="1.3"/><ellipse cx="1465.87" cy="253.75" rx="4.7" ry="5.7" fill="rgb(179,178,124)" stroke="#000" stroke-width="1.3"/><ellipse cx="1748.62" cy="223" rx="4.7" ry="5.7" fill="rgb(205,40,40)" stroke="#000" stroke-width="1.3"/><ellipse cx="1688.62" cy="233.87" rx="4.7" ry="5.7" fill="rgb(199,61,61)" stroke="#000" stroke-width="1.3"/><ellipse cx="1626.74" cy="245.5" rx="4.7" ry="5.7" fill="rgb(193,84,84)" stroke="#000" stroke-width="1.3"/><ellipse cx="1573.5" cy="255.62" rx="4.7" ry="5.7" fill="rgb(187,108,108)" stroke="#000" stroke-width="1.3"/><ellipse cx="1516.12" cy="265.75" rx="4.7" ry="5.7" fill="rgb(181,135,135)" stroke="#000" stroke-width="1.3"/><ellipse cx="1397.62" cy="285.62" rx="4.7" ry="5.7" fill="rgb(0,185,195)" stroke="#000" stroke-width="1.3"/><ellipse cx="1411.12" cy="284.5" rx="4.7" ry="5.7" fill="rgb(28,182,191)" stroke="#000" stroke-width="1.3"/><ellipse cx="1425" cy="281.12" rx="4.7" ry="5.7" fill="rgb(57,180,187)" stroke="#000" stroke-width="1.3"/><ellipse cx="1438.87" cy="279.62" rx="4.7" ry="5.7" fill="rgb(89,178,183)" stroke="#000" stroke-width="1.3"/><ellipse cx="1452" cy="275.5" rx="4.7" ry="5.7" fill="rgb(124,175,178)" stroke="#000" stroke-width="1.3"/><ellipse cx="1450.12" cy="608.87" rx="4.7" ry="5.7" fill="rgb(30,30,175)" stroke="#000" stroke-width="1.3"/><ellipse cx="1455.75" cy="497.5" rx="4.7" ry="5.7" fill="rgb(53,53,174)" stroke="#000" stroke-width="1.3"/><ellipse cx="1459.12" cy="419.87" rx="4.7" ry="5.7" fill="rgb(77,77,173)" stroke="#000" stroke-width="1.3"/><ellipse cx="1462.87" cy="358.75" rx="4.7" ry="5.7" fill="rgb(103,103,173)" stroke="#000" stroke-width="1.3"/><ellipse cx="1464" cy="312.25" rx="4.7" ry="5.7" fill="rgb(132,132,172)" stroke="#000" stroke-width="1.3"/><ellipse cx="1594.5" cy="423.62" rx="4.7" ry="5.7" fill="rgb(195,55,195)" stroke="#000" stroke-width="1.3"/><ellipse cx="1556.62" cy="380.5" rx="4.7" ry="5.7" fill="rgb(191,74,191)" stroke="#000" stroke-width="1.3"/><ellipse cx="1526.62" cy="346" rx="4.7" ry="5.7" fill="rgb(187,94,187)" stroke="#000" stroke-width="1.3"/><ellipse cx="1504.87" cy="320.12" rx="4.7" ry="5.7" fill="rgb(183,115,183)" stroke="#000" stroke-width="1.3"/><ellipse cx="1483.87" cy="296.5" rx="4.7" ry="5.7" fill="rgb(178,139,178)" stroke="#000" stroke-width="1.3"/><rect x="1460.02" y="269.94" width="13" height="16" fill="none" stroke="#000" stroke-width="1.8"/><ellipse cx="1465.87" cy="274.37" rx="4.7" ry="5.7" fill="#fff" stroke="#000" stroke-width="1.3"/></svg>
<div style="left:1681px;top:566px;width:222.5px;height:183px;background:#9a9a9a;border:1.5px solid #3a3a3a"></div>
<div style="left:1684px;top:569px;width:217px;height:177px;overflow:hidden;background:linear-gradient(125deg,#b0ff00 2%,#ffff18 50%,#ffd400 80%,#ffae00 98%)"><div style="left:0;top:0;width:217px;height:177px;background:rgba(0,0,0,.4);clip-path:polygon(0 0,217px 0,217px 159px,0 18px)"></div></div>
<svg style="left:1684px;top:569px" width="217" height="177"><rect x="101" y="80" width="14" height="15" fill="none" stroke="#fff" stroke-width="1.5"/><ellipse cx="108" cy="45.5" rx="4.4" ry="5.2" fill="#c4bc00" stroke="#000" stroke-width="1.3"/></svg>
<svg style="left:1520px;top:1070px" width="400" height="100" viewBox="0 0 400 100"><g fill="none" stroke-linejoin="miter" stroke-linecap="butt"><path d="M26.88 62.14 L67.71 58.13 L66.25 28.59 L16.3 18.39 L18.49 67.61 L48.02 83.65 L102.71 65.42 L72.08 59.95" stroke="rgba(215,205,205,.55)" stroke-width="6.6"/><path d="M26.88 62.14 L67.71 58.13 L66.25 28.59 L16.3 18.39 L18.49 67.61 L48.02 83.65 L102.71 65.42 L72.08 59.95" stroke="rgba(128,32,38,.88)" stroke-width="4.2"/><path d="M29.06 34.79 L44.38 53.75 L72.08 16.93" stroke="rgba(205,205,205,.8)" stroke-width="6.4" stroke-linejoin="round"/><path d="M29.06 34.79 L44.38 53.75 L72.08 16.93" stroke="rgba(62,62,62,.95)" stroke-width="4.2" stroke-linejoin="round"/></g><text x="73.5" y="56.7" font-family="Liberation Sans,sans-serif" font-weight="bold" font-size="37" textLength="196" lengthAdjust="spacingAndGlyphs" fill="rgba(132,36,42,.9)" stroke="rgba(215,200,200,.55)" stroke-width="2.8" paint-order="stroke">NOTEBOOK</text><text x="271.5" y="56.7" font-family="Liberation Sans,sans-serif" font-weight="bold" font-size="37" textLength="118" lengthAdjust="spacingAndGlyphs" fill="rgba(46,46,46,.9)" stroke="rgba(215,215,215,.55)" stroke-width="2.8" paint-order="stroke">CHECK</text></svg></body></html>
